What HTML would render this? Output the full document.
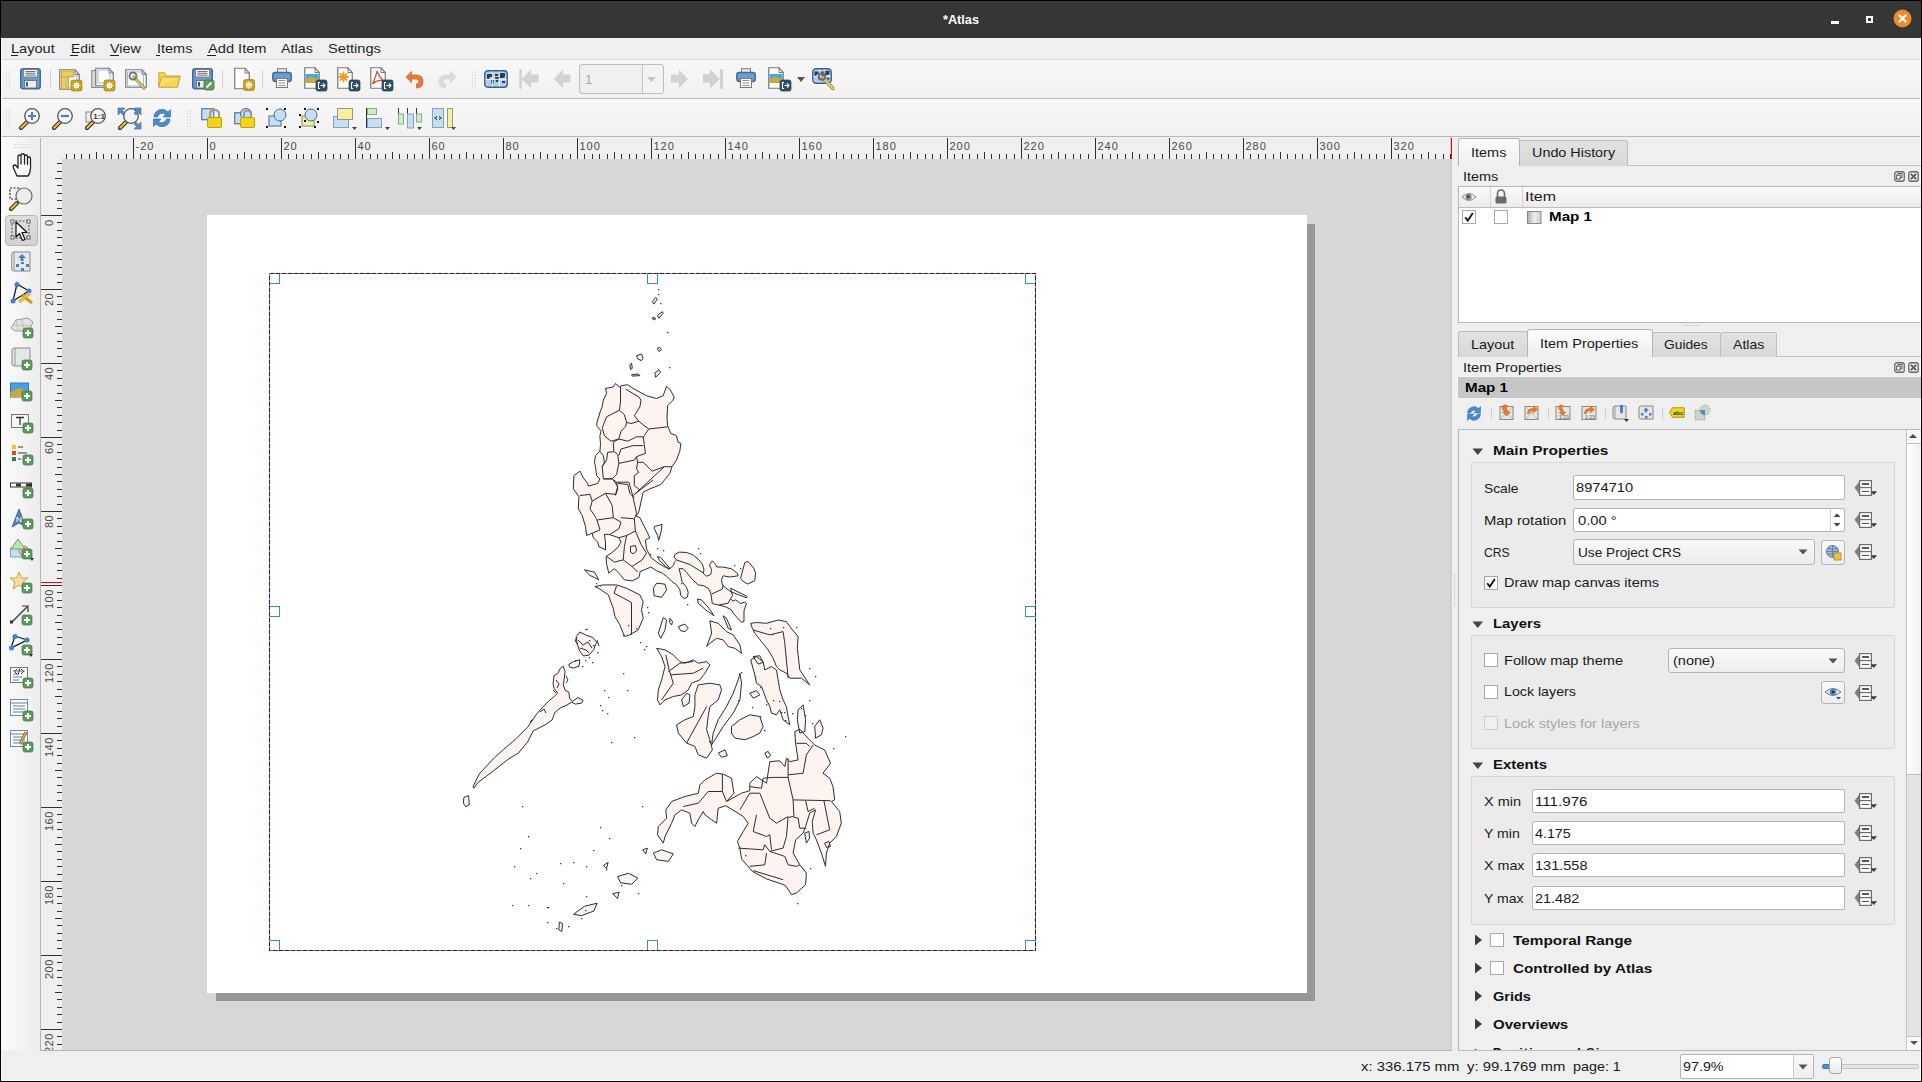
<!DOCTYPE html>
<html><head><meta charset="utf-8">
<style>
html,body{margin:0;padding:0;width:1922px;height:1082px;overflow:hidden;background:#000;position:relative;}
*{box-sizing:border-box;}
body{font-family:"Liberation Sans",sans-serif;font-size:13px;color:#1a1a1a;}
.a{position:absolute;}
.t{position:absolute;white-space:nowrap;line-height:1;}
svg{position:absolute;overflow:visible;}
</style></head><body>
<div class="a" style="left:1px;top:1px;width:1920px;height:1080px;background:#efefef;"></div>
<div class="a" style="left:1px;top:1px;width:1920px;height:37px;background:#363636;"></div>
<div class="t" style="left:943.00px;top:12.99px;font-size:13px;color:#ffffff;transform:scaleX(0.9768);transform-origin:0 0;font-weight:bold;">*Atlas</div>
<div class="a" style="left:1831px;top:21px;width:8px;height:3px;background:#fff;"></div>
<div class="a" style="left:1866px;top:16px;width:7px;height:7px;border:2px solid #fff;background:#363636;"></div>
<svg style="left:1893px;top:9px" width="19" height="19"><circle cx="9.5" cy="9.5" r="9" fill="#f0892a"/><path d="M5.8 5.8L13.2 13.2M13.2 5.8L5.8 13.2" stroke="#fff" stroke-width="2.2"/></svg>
<div class="a" style="left:1px;top:38px;width:1920px;height:21px;background:#efefef;"></div>
<div class="a" style="left:1px;top:59px;width:1920px;height:1px;background:#d8d8d8;"></div>
<div class="t" style="left:11.40px;top:41.99px;font-size:13px;color:#1e1e1e;transform:scaleX(1.1212);transform-origin:0 0;">Layout</div>
<div class="t" style="left:70.80px;top:41.99px;font-size:13px;color:#1e1e1e;transform:scaleX(1.0658);transform-origin:0 0;">Edit</div>
<div class="t" style="left:110.30px;top:41.99px;font-size:13px;color:#1e1e1e;transform:scaleX(1.1020);transform-origin:0 0;">View</div>
<div class="t" style="left:156.50px;top:41.99px;font-size:13px;color:#1e1e1e;transform:scaleX(1.1137);transform-origin:0 0;">Items</div>
<div class="t" style="left:207.50px;top:41.99px;font-size:13px;color:#1e1e1e;transform:scaleX(1.1250);transform-origin:0 0;">Add Item</div>
<div class="t" style="left:281.40px;top:41.99px;font-size:13px;color:#1e1e1e;transform:scaleX(1.0994);transform-origin:0 0;">Atlas</div>
<div class="t" style="left:328.40px;top:41.99px;font-size:13px;color:#1e1e1e;transform:scaleX(1.1257);transform-origin:0 0;">Settings</div>
<div class="a" style="left:11px;top:55px;width:7px;height:1px;background:#1e1e1e;"></div>
<div class="a" style="left:70px;top:55px;width:8px;height:1px;background:#1e1e1e;"></div>
<div class="a" style="left:110px;top:55px;width:9px;height:1px;background:#1e1e1e;"></div>
<div class="a" style="left:156px;top:55px;width:4px;height:1px;background:#1e1e1e;"></div>
<div class="a" style="left:207px;top:55px;width:9px;height:1px;background:#1e1e1e;"></div>
<div class="a" style="left:1px;top:60px;width:1920px;height:38px;background:linear-gradient(#f8f8f8,#f1f1f1);"></div>
<div class="a" style="left:1px;top:98px;width:1920px;height:1px;background:#bdbdbd;"></div>
<div class="a" style="left:1px;top:99px;width:1920px;height:37px;background:linear-gradient(#f8f8f8,#f1f1f1);"></div>
<div class="a" style="left:1px;top:136px;width:1920px;height:1px;background:#b8b8b8;"></div>
<div class="a" style="left:1px;top:137px;width:39px;height:913px;background:linear-gradient(90deg,#fbfbfb,#ececec);"></div>
<div class="a" style="left:40px;top:138px;width:1px;height:912px;background:#b5b5b5;"></div>
<div class="a" style="left:41px;top:137px;width:1410px;height:22px;background:#efefef;"></div>
<div class="a" style="left:41px;top:159px;width:21px;height:891px;background:#efefef;"></div>
<div class="a" style="left:62px;top:159px;width:1390px;height:891px;background:#d7d7d7;"></div>
<div class="a" style="left:40px;top:1050px;width:1412px;height:1px;background:#b5b5b5;"></div>
<div class="a" style="left:216px;top:224px;width:1099px;height:777px;background:#979797;"></div>
<div class="a" style="left:207px;top:215px;width:1100px;height:778px;background:#ffffff;"></div>
<div class="a" style="left:1452px;top:137px;width:469px;height:913px;background:#efefef;"></div>
<div class="a" style="left:1450px;top:137px;width:2px;height:913px;background:#cfcfcf;"></div>
<div class="a" style="left:1px;top:1051px;width:1920px;height:29px;background:#efefef;"></div>
<div class="a" style="left:1px;top:1080px;width:1920px;height:1px;background:#ffffff;"></div>
<div class="a" style="left:1px;top:38px;width:1px;height:1043px;background:#fbfbfb;"></div>
<div class="a" style="left:1920px;top:38px;width:1px;height:392px;background:#fbfbfb;"></div>
<div class="a" style="left:1920px;top:1051px;width:1px;height:30px;background:#fbfbfb;"></div>
<svg style="left:0;top:0" width="1922" height="1082"><path d="M66.5 154V159M74.5 154V159M81.5 154V159M89.5 154V159M96.5 152V159M103.5 154V159M111.5 154V159M118.5 154V159M126.5 154V159M133.5 138V159M140.5 154V159M148.5 154V159M155.5 154V159M163.5 154V159M170.5 152V159M177.5 154V159M185.5 154V159M192.5 154V159M200.5 154V159M207.5 138V159M214.5 154V159M222.5 154V159M229.5 154V159M237.5 154V159M244.5 152V159M251.5 154V159M259.5 154V159M266.5 154V159M274.5 154V159M281.5 138V159M288.5 154V159M296.5 154V159M303.5 154V159M311.5 154V159M318.5 152V159M325.5 154V159M333.5 154V159M340.5 154V159M348.5 154V159M355.5 138V159M362.5 154V159M370.5 154V159M377.5 154V159M385.5 154V159M392.5 152V159M399.5 154V159M407.5 154V159M414.5 154V159M422.5 154V159M429.5 138V159M436.5 154V159M444.5 154V159M451.5 154V159M459.5 154V159M466.5 152V159M473.5 154V159M481.5 154V159M488.5 154V159M496.5 154V159M503.5 138V159M510.5 154V159M518.5 154V159M525.5 154V159M533.5 154V159M540.5 152V159M547.5 154V159M555.5 154V159M562.5 154V159M570.5 154V159M577.5 138V159M584.5 154V159M592.5 154V159M599.5 154V159M607.5 154V159M614.5 152V159M621.5 154V159M629.5 154V159M636.5 154V159M644.5 154V159M651.5 138V159M658.5 154V159M666.5 154V159M673.5 154V159M681.5 154V159M688.5 152V159M695.5 154V159M703.5 154V159M710.5 154V159M718.5 154V159M725.5 138V159M732.5 154V159M740.5 154V159M747.5 154V159M755.5 154V159M762.5 152V159M769.5 154V159M777.5 154V159M784.5 154V159M792.5 154V159M799.5 138V159M806.5 154V159M814.5 154V159M821.5 154V159M829.5 154V159M836.5 152V159M843.5 154V159M851.5 154V159M858.5 154V159M866.5 154V159M873.5 138V159M880.5 154V159M888.5 154V159M895.5 154V159M903.5 154V159M910.5 152V159M917.5 154V159M925.5 154V159M932.5 154V159M940.5 154V159M947.5 138V159M954.5 154V159M962.5 154V159M969.5 154V159M977.5 154V159M984.5 152V159M991.5 154V159M999.5 154V159M1006.5 154V159M1014.5 154V159M1021.5 138V159M1028.5 154V159M1036.5 154V159M1043.5 154V159M1051.5 154V159M1058.5 152V159M1065.5 154V159M1073.5 154V159M1080.5 154V159M1088.5 154V159M1095.5 138V159M1102.5 154V159M1110.5 154V159M1117.5 154V159M1125.5 154V159M1132.5 152V159M1139.5 154V159M1147.5 154V159M1154.5 154V159M1162.5 154V159M1169.5 138V159M1176.5 154V159M1184.5 154V159M1191.5 154V159M1199.5 154V159M1206.5 152V159M1213.5 154V159M1221.5 154V159M1228.5 154V159M1236.5 154V159M1243.5 138V159M1250.5 154V159M1258.5 154V159M1265.5 154V159M1273.5 154V159M1280.5 152V159M1287.5 154V159M1295.5 154V159M1302.5 154V159M1310.5 154V159M1317.5 138V159M1324.5 154V159M1332.5 154V159M1339.5 154V159M1347.5 154V159M1354.5 152V159M1361.5 154V159M1369.5 154V159M1376.5 154V159M1384.5 154V159M1391.5 138V159M1398.5 154V159M1406.5 154V159M1413.5 154V159M1421.5 154V159M1428.5 152V159M1435.5 154V159M1443.5 154V159M1450.5 154V159M57 163.5H62M57 171.5H62M55 178.5H62M57 185.5H62M57 193.5H62M57 200.5H62M57 208.5H62M41 215.5H62M57 222.5H62M57 230.5H62M57 237.5H62M57 245.5H62M55 252.5H62M57 259.5H62M57 267.5H62M57 274.5H62M57 282.5H62M41 289.5H62M57 296.5H62M57 304.5H62M57 311.5H62M57 319.5H62M55 326.5H62M57 333.5H62M57 341.5H62M57 348.5H62M57 356.5H62M41 363.5H62M57 370.5H62M57 378.5H62M57 385.5H62M57 393.5H62M55 400.5H62M57 407.5H62M57 415.5H62M57 422.5H62M57 430.5H62M41 437.5H62M57 444.5H62M57 452.5H62M57 459.5H62M57 467.5H62M55 474.5H62M57 481.5H62M57 489.5H62M57 496.5H62M57 504.5H62M41 511.5H62M57 518.5H62M57 526.5H62M57 533.5H62M57 541.5H62M55 548.5H62M57 555.5H62M57 563.5H62M57 570.5H62M57 578.5H62M41 585.5H62M57 592.5H62M57 600.5H62M57 607.5H62M57 615.5H62M55 622.5H62M57 629.5H62M57 637.5H62M57 644.5H62M57 652.5H62M41 659.5H62M57 666.5H62M57 674.5H62M57 681.5H62M57 689.5H62M55 696.5H62M57 703.5H62M57 711.5H62M57 718.5H62M57 726.5H62M41 733.5H62M57 740.5H62M57 748.5H62M57 755.5H62M57 763.5H62M55 770.5H62M57 777.5H62M57 785.5H62M57 792.5H62M57 800.5H62M41 807.5H62M57 814.5H62M57 822.5H62M57 829.5H62M57 837.5H62M55 844.5H62M57 851.5H62M57 859.5H62M57 866.5H62M57 874.5H62M41 881.5H62M57 888.5H62M57 896.5H62M57 903.5H62M57 911.5H62M55 918.5H62M57 925.5H62M57 933.5H62M57 940.5H62M57 948.5H62M41 955.5H62M57 962.5H62M57 970.5H62M57 977.5H62M57 985.5H62M55 992.5H62M57 999.5H62M57 1007.5H62M57 1014.5H62M57 1022.5H62M41 1029.5H62M57 1036.5H62M57 1044.5H62" stroke="#303030" stroke-width="1" fill="none"/></svg>
<div class="t" style="left:135.50px;top:140.68px;font-size:11px;color:#4a4a4a;letter-spacing:1px;">-20</div>
<div class="t" style="left:209.50px;top:140.68px;font-size:11px;color:#4a4a4a;letter-spacing:1px;">0</div>
<div class="t" style="left:283.50px;top:140.68px;font-size:11px;color:#4a4a4a;letter-spacing:1px;">20</div>
<div class="t" style="left:357.50px;top:140.68px;font-size:11px;color:#4a4a4a;letter-spacing:1px;">40</div>
<div class="t" style="left:431.50px;top:140.68px;font-size:11px;color:#4a4a4a;letter-spacing:1px;">60</div>
<div class="t" style="left:505.50px;top:140.68px;font-size:11px;color:#4a4a4a;letter-spacing:1px;">80</div>
<div class="t" style="left:579.50px;top:140.68px;font-size:11px;color:#4a4a4a;letter-spacing:1px;">100</div>
<div class="t" style="left:653.50px;top:140.68px;font-size:11px;color:#4a4a4a;letter-spacing:1px;">120</div>
<div class="t" style="left:727.50px;top:140.68px;font-size:11px;color:#4a4a4a;letter-spacing:1px;">140</div>
<div class="t" style="left:801.50px;top:140.68px;font-size:11px;color:#4a4a4a;letter-spacing:1px;">160</div>
<div class="t" style="left:875.50px;top:140.68px;font-size:11px;color:#4a4a4a;letter-spacing:1px;">180</div>
<div class="t" style="left:949.50px;top:140.68px;font-size:11px;color:#4a4a4a;letter-spacing:1px;">200</div>
<div class="t" style="left:1023.50px;top:140.68px;font-size:11px;color:#4a4a4a;letter-spacing:1px;">220</div>
<div class="t" style="left:1097.50px;top:140.68px;font-size:11px;color:#4a4a4a;letter-spacing:1px;">240</div>
<div class="t" style="left:1171.50px;top:140.68px;font-size:11px;color:#4a4a4a;letter-spacing:1px;">260</div>
<div class="t" style="left:1245.50px;top:140.68px;font-size:11px;color:#4a4a4a;letter-spacing:1px;">280</div>
<div class="t" style="left:1319.50px;top:140.68px;font-size:11px;color:#4a4a4a;letter-spacing:1px;">300</div>
<div class="t" style="left:1393.50px;top:140.68px;font-size:11px;color:#4a4a4a;letter-spacing:1px;">320</div>
<div class="a" style="left:41px;top:159px;width:14px;height:891px;overflow:hidden"><div class="t" style="left:2.68px;top:66.60px;font-size:11px;letter-spacing:0.000px;color:#4a4a4a;transform:rotate(-90deg);transform-origin:0 0;">0</div>
<div class="t" style="left:2.68px;top:147.20px;font-size:11px;letter-spacing:0.490px;color:#4a4a4a;transform:rotate(-90deg);transform-origin:0 0;">20</div>
<div class="t" style="left:2.68px;top:221.20px;font-size:11px;letter-spacing:0.490px;color:#4a4a4a;transform:rotate(-90deg);transform-origin:0 0;">40</div>
<div class="t" style="left:2.68px;top:295.20px;font-size:11px;letter-spacing:0.490px;color:#4a4a4a;transform:rotate(-90deg);transform-origin:0 0;">60</div>
<div class="t" style="left:2.68px;top:369.20px;font-size:11px;letter-spacing:0.490px;color:#4a4a4a;transform:rotate(-90deg);transform-origin:0 0;">80</div>
<div class="t" style="left:2.68px;top:449.80px;font-size:11px;letter-spacing:0.465px;color:#4a4a4a;transform:rotate(-90deg);transform-origin:0 0;">100</div>
<div class="t" style="left:2.68px;top:523.80px;font-size:11px;letter-spacing:0.465px;color:#4a4a4a;transform:rotate(-90deg);transform-origin:0 0;">120</div>
<div class="t" style="left:2.68px;top:597.80px;font-size:11px;letter-spacing:0.465px;color:#4a4a4a;transform:rotate(-90deg);transform-origin:0 0;">140</div>
<div class="t" style="left:2.68px;top:671.80px;font-size:11px;letter-spacing:0.465px;color:#4a4a4a;transform:rotate(-90deg);transform-origin:0 0;">160</div>
<div class="t" style="left:2.68px;top:745.80px;font-size:11px;letter-spacing:0.465px;color:#4a4a4a;transform:rotate(-90deg);transform-origin:0 0;">180</div>
<div class="t" style="left:2.68px;top:819.80px;font-size:11px;letter-spacing:0.465px;color:#4a4a4a;transform:rotate(-90deg);transform-origin:0 0;">200</div>
<div class="t" style="left:2.68px;top:893.80px;font-size:11px;letter-spacing:0.465px;color:#4a4a4a;transform:rotate(-90deg);transform-origin:0 0;">220</div>
</div>
<div class="a" style="left:1451px;top:138px;width:1px;height:21px;background:#ff0000;"></div>
<div class="a" style="left:41px;top:582px;width:21px;height:1px;background:#ff0000;"></div>
<div class="a" style="left:1458px;top:165px;width:463px;height:1px;background:#c2c2c2;"></div>
<div class="a" style="left:1519px;top:140px;width:109px;height:26px;background:linear-gradient(#e2e2e2,#d8d8d8);border:1px solid #bdbdbd;border-bottom:none;border-radius:3px 3px 0 0;"></div>
<div class="a" style="left:1458px;top:138px;width:62px;height:28px;background:linear-gradient(#fbfbfb,#efefef);border:1px solid #b4b4b4;border-bottom:none;border-radius:3px 3px 0 0;"></div>
<div class="t" style="left:1470.60px;top:145.99px;font-size:13px;color:#1a1a1a;transform:scaleX(1.1137);transform-origin:0 0;">Items</div>
<div class="t" style="left:1531.80px;top:146.49px;font-size:13px;color:#1a1a1a;transform:scaleX(1.1059);transform-origin:0 0;">Undo History</div>
<div class="t" style="left:1462.50px;top:169.69px;font-size:13px;color:#1a1a1a;transform:scaleX(1.1106);transform-origin:0 0;">Items</div>
<svg style="left:1894px;top:171px" width="26" height="11"><rect x="0.75" y="0.75" width="9.5" height="9.5" rx="2" fill="none" stroke="#6a6a6a" stroke-width="1.3"/><rect x="4" y="2.5" width="4" height="4" fill="none" stroke="#6a6a6a" stroke-width="1.1"/><rect x="2.5" y="4.2" width="3.8" height="3.8" fill="#fff" stroke="#6a6a6a" stroke-width="1.1"/><rect x="14.75" y="0.75" width="9.5" height="9.5" rx="2" fill="none" stroke="#6a6a6a" stroke-width="1.3"/><path d="M16.8 2.8L22.2 8.2M22.2 2.8L16.8 8.2" stroke="#5a5a5a" stroke-width="1.8"/></svg>
<div class="a" style="left:1458px;top:186px;width:463px;height:137px;background:#fff;border:1px solid #b9b9b9;border-right:none;"></div>
<div class="a" style="left:1459px;top:187px;width:462px;height:21px;background:linear-gradient(#fafafa,#ececec);border-bottom:1px solid #bdbdbd;"></div>
<div class="a" style="left:1490px;top:187px;width:1px;height:20px;background:#d2d2d2;"></div>
<div class="a" style="left:1522px;top:187px;width:1px;height:20px;background:#d2d2d2;"></div>
<div class="t" style="left:1525.40px;top:190.49px;font-size:13px;color:#1a1a1a;transform:scaleX(1.2260);transform-origin:0 0;">Item</div>
<svg style="left:1461px;top:191px" width="16" height="12"><path d="M1 6Q8 -1 15 6Q8 13 1 6Z" fill="#eee" stroke="#8a8a8a" stroke-width="1"/><circle cx="7.5" cy="6" r="3" fill="#7a7a7a"/><circle cx="7" cy="5.5" r="1" fill="#222"/></svg>
<svg style="left:1494px;top:189px" width="14" height="16"><path d="M3.5 8V5Q3.5 1 7 1Q10.5 1 10.5 5V8" fill="none" stroke="#6b6b6b" stroke-width="1.6"/><rect x="1.5" y="7.5" width="11" height="7" rx="1.5" fill="#6b6b6b"/></svg>
<div class="a" style="left:1462px;top:210px;width:14px;height:14px;background:#fff;border:1px solid #a8a8a8;"></div>
<svg style="left:1464px;top:212px" width="10" height="10"><path d="M1.2 5.2L3.8 8.6L8.8 1" fill="none" stroke="#111" stroke-width="1.8"/></svg>
<div class="a" style="left:1494px;top:210px;width:14px;height:14px;background:#fff;border:1px solid #a8a8a8;"></div>
<svg style="left:1527px;top:210px" width="15" height="14"><rect x="0.5" y="1.5" width="13.5" height="12" fill="url(#gmap)" stroke="#888"/><defs><linearGradient id="gmap"><stop offset="0" stop-color="#aaa"/><stop offset="0.5" stop-color="#eee"/><stop offset="1" stop-color="#ccc"/></linearGradient></defs></svg>
<div class="t" style="left:1549.00px;top:210.49px;font-size:13px;color:#000;transform:scaleX(1.1667);transform-origin:0 0;font-weight:bold;">Map 1</div>
<svg style="left:1454px;top:574px" width="2" height="32"><path d="M0.5 0.5v31" stroke="#a8a8a8" stroke-dasharray="1 2"/></svg>
<svg style="left:1683px;top:325px" width="18" height="2"><path d="M0.5 0.5h1M3.5 0.5h1M6.5 0.5h1M9.5 0.5h1M12.5 0.5h1M15.5 0.5h1" stroke="#aaa"/></svg>
<div class="a" style="left:1458px;top:356px;width:463px;height:1px;background:#c2c2c2;"></div>
<div class="a" style="left:1458px;top:331px;width:70px;height:26px;background:linear-gradient(#e2e2e2,#d8d8d8);border:1px solid #bdbdbd;border-bottom:none;border-radius:3px 3px 0 0;"></div>
<div class="a" style="left:1652px;top:332px;width:69px;height:25px;background:linear-gradient(#e2e2e2,#d8d8d8);border:1px solid #bdbdbd;border-bottom:none;border-radius:3px 3px 0 0;"></div>
<div class="a" style="left:1720px;top:332px;width:57px;height:25px;background:linear-gradient(#e2e2e2,#d8d8d8);border:1px solid #bdbdbd;border-bottom:none;border-radius:3px 3px 0 0;"></div>
<div class="a" style="left:1527px;top:329px;width:126px;height:28px;background:linear-gradient(#fbfbfb,#efefef);border:1px solid #b4b4b4;border-bottom:none;border-radius:3px 3px 0 0;"></div>
<div class="t" style="left:1470.80px;top:337.69px;font-size:13px;color:#1a1a1a;transform:scaleX(1.1084);transform-origin:0 0;">Layout</div>
<div class="t" style="left:1539.70px;top:336.99px;font-size:13px;color:#1a1a1a;transform:scaleX(1.1153);transform-origin:0 0;">Item Properties</div>
<div class="t" style="left:1663.50px;top:337.59px;font-size:13px;color:#1a1a1a;transform:scaleX(1.0604);transform-origin:0 0;">Guides</div>
<div class="t" style="left:1732.70px;top:337.59px;font-size:13px;color:#1a1a1a;transform:scaleX(1.0821);transform-origin:0 0;">Atlas</div>
<div class="t" style="left:1462.50px;top:360.99px;font-size:13px;color:#1a1a1a;transform:scaleX(1.1175);transform-origin:0 0;">Item Properties</div>
<svg style="left:1894px;top:362px" width="26" height="11"><rect x="0.75" y="0.75" width="9.5" height="9.5" rx="2" fill="none" stroke="#6a6a6a" stroke-width="1.3"/><rect x="4" y="2.5" width="4" height="4" fill="none" stroke="#6a6a6a" stroke-width="1.1"/><rect x="2.5" y="4.2" width="3.8" height="3.8" fill="#fff" stroke="#6a6a6a" stroke-width="1.1"/><rect x="14.75" y="0.75" width="9.5" height="9.5" rx="2" fill="none" stroke="#6a6a6a" stroke-width="1.3"/><path d="M16.8 2.8L22.2 8.2M22.2 2.8L16.8 8.2" stroke="#5a5a5a" stroke-width="1.8"/></svg>
<div class="a" style="left:1457px;top:376px;width:464px;height:23px;background:#f5f5f5;"></div>
<div class="a" style="left:1458px;top:377px;width:463px;height:21px;background:#c6c6c6;"></div>
<div class="t" style="left:1464.60px;top:380.99px;font-size:13px;color:#000;transform:scaleX(1.1667);transform-origin:0 0;font-weight:bold;">Map 1</div>
<div class="a" style="left:1458px;top:429px;width:463px;height:622px;border:1px solid #b9b9b9;border-right:none;border-bottom:none;background:#efefef;"></div>
<div class="a" style="left:1906px;top:430px;width:15px;height:620px;background:#e4e4e4;border-left:1px solid #c4c4c4;"></div>
<div class="a" style="left:1907px;top:430px;width:14px;height:14px;background:#f8f8f8;border-bottom:1px solid #c2c2c2;"></div>
<div class="a" style="left:1907px;top:444px;width:14px;height:331px;background:linear-gradient(90deg,#fefefe,#f1f1f1);border-bottom:1px solid #bfbfbf;"></div>
<div class="a" style="left:1907px;top:1036px;width:14px;height:14px;background:#f8f8f8;border-top:1px solid #c2c2c2;"></div>
<div class="a" style="left:1458px;top:1050px;width:463px;height:1px;background:#bcbcbc;"></div>
<svg style="left:1908px;top:433px" width="12" height="8"><path d="M1 5L5 1L9 5Z" fill="#4a4a4a"/></svg>
<svg style="left:1908px;top:1039px" width="12" height="8"><path d="M2 2L6 6L10 2Z" fill="#555"/></svg>
<svg style="left:1472px;top:448px" width="12" height="8"><path d="M0.5 0.5H11L5.75 7Z" fill="#444"/></svg>
<div class="t" style="left:1492.80px;top:443.79px;font-size:13px;color:#111;transform:scaleX(1.1836);transform-origin:0 0;font-weight:bold;">Main Properties</div>
<div class="a" style="left:1471px;top:462px;width:424px;height:146px;border:1px solid #d6d6d6;background:#ebebeb;border-radius:2px;"></div>
<div class="t" style="left:1484.00px;top:482.19px;font-size:13px;color:#1a1a1a;transform:scaleX(1.0615);transform-origin:0 0;">Scale</div>
<div class="a" style="left:1573px;top:475px;width:272px;height:25px;background:#fff;border:1px solid #b4b4b4;border-radius:2px;"></div>
<div class="t" style="left:1576.00px;top:481.29px;font-size:13px;color:#1a1a1a;transform:scaleX(1.1297);transform-origin:0 0;">8974710</div>
<svg style="left:1854px;top:479px" width="24" height="18"><path d="M0.5 8.75L6 1.5V16Z" fill="#808080"/><rect x="5.6" y="1.6" width="11.8" height="7" fill="#fff" stroke="#6e6e6e" stroke-width="1.2"/><rect x="5.6" y="8.6" width="11.8" height="7.8" fill="#fff" stroke="#6e6e6e" stroke-width="1.2"/><path d="M8 5H15" stroke="#444" stroke-width="1.8"/><path d="M8 12.4H15" stroke="#444" stroke-width="1"/><path d="M16.5 12.2H23L19.75 16Z" fill="#3a3a3a"/></svg>
<div class="t" style="left:1484.00px;top:514.19px;font-size:13px;color:#1a1a1a;transform:scaleX(1.1386);transform-origin:0 0;">Map rotation</div>
<div class="a" style="left:1573px;top:508px;width:272px;height:24px;background:#fff;border:1px solid #b4b4b4;border-radius:2px;"></div>
<div class="a" style="left:1830px;top:509px;width:1px;height:22px;background:#d0d0d0;"></div>
<svg style="left:1832px;top:511px" width="10" height="18"><path d="M1.5 6L5 2.5L8.5 6Z" fill="#444"/><path d="M1.5 12L5 15.5L8.5 12Z" fill="#444"/></svg>
<div class="t" style="left:1578.20px;top:514.19px;font-size:13px;color:#1a1a1a;transform:scaleX(1.1341);transform-origin:0 0;">0.00 °</div>
<svg style="left:1854px;top:511px" width="24" height="18"><path d="M0.5 8.75L6 1.5V16Z" fill="#808080"/><rect x="5.6" y="1.6" width="11.8" height="7" fill="#fff" stroke="#6e6e6e" stroke-width="1.2"/><rect x="5.6" y="8.6" width="11.8" height="7.8" fill="#fff" stroke="#6e6e6e" stroke-width="1.2"/><path d="M8 5H15" stroke="#444" stroke-width="1.8"/><path d="M8 12.4H15" stroke="#444" stroke-width="1"/><path d="M16.5 12.2H23L19.75 16Z" fill="#3a3a3a"/></svg>
<div class="t" style="left:1484.00px;top:546.29px;font-size:13px;color:#1a1a1a;transform:scaleX(0.9369);transform-origin:0 0;">CRS</div>
<div class="a" style="left:1573px;top:539px;width:242px;height:26px;background:linear-gradient(#f9f9f9,#ededed);border:1px solid #b4b4b4;border-radius:3px;"></div>
<div class="t" style="left:1578.20px;top:546.29px;font-size:13px;color:#1a1a1a;transform:scaleX(1.0490);transform-origin:0 0;">Use Project CRS</div>
<svg style="left:1798px;top:549px" width="10" height="6"><path d="M0.5 0.5H9.5L5 5.5Z" fill="#555"/></svg>
<div class="a" style="left:1821px;top:540px;width:24px;height:25px;background:linear-gradient(#f9f9f9,#ededed);border:1px solid #b4b4b4;border-radius:3px;"></div>
<svg style="left:1825px;top:544px" width="17" height="17"><circle cx="7.5" cy="7.5" r="6" fill="#9db7d5" stroke="#5a7aa0"/><path d="M1.5 7.5H13.5M7.5 1.5V13.5M3 4.5Q7.5 6 12 4.5M3 10.5Q7.5 9 12 10.5" stroke="#5a7aa0" fill="none" stroke-width="0.8"/><rect x="9" y="9" width="7" height="7" fill="#e8c240" stroke="#a88a20" stroke-width="0.8"/></svg>
<svg style="left:1854px;top:543px" width="24" height="18"><path d="M0.5 8.75L6 1.5V16Z" fill="#808080"/><rect x="5.6" y="1.6" width="11.8" height="7" fill="#fff" stroke="#6e6e6e" stroke-width="1.2"/><rect x="5.6" y="8.6" width="11.8" height="7.8" fill="#fff" stroke="#6e6e6e" stroke-width="1.2"/><path d="M8 5H15" stroke="#444" stroke-width="1.8"/><path d="M8 12.4H15" stroke="#444" stroke-width="1"/><path d="M16.5 12.2H23L19.75 16Z" fill="#3a3a3a"/></svg>
<div class="a" style="left:1484px;top:576px;width:14px;height:14px;background:#fff;border:1px solid #a8a8a8;"></div>
<svg style="left:1486px;top:578px" width="10" height="10"><path d="M1.2 5.2L3.8 8.6L8.8 1" fill="none" stroke="#111" stroke-width="1.8"/></svg>
<div class="t" style="left:1503.80px;top:575.99px;font-size:13px;color:#1a1a1a;transform:scaleX(1.1182);transform-origin:0 0;">Draw map canvas items</div>
<svg style="left:1472px;top:621px" width="12" height="8"><path d="M0.5 0.5H11L5.75 7Z" fill="#444"/></svg>
<div class="t" style="left:1492.50px;top:616.99px;font-size:13px;color:#111;transform:scaleX(1.1449);transform-origin:0 0;font-weight:bold;">Layers</div>
<div class="a" style="left:1471px;top:635px;width:424px;height:114px;border:1px solid #d6d6d6;background:#ebebeb;border-radius:2px;"></div>
<div class="a" style="left:1484px;top:653px;width:14px;height:14px;background:#fff;border:1px solid #a8a8a8;"></div>
<div class="t" style="left:1503.80px;top:653.99px;font-size:13px;color:#1a1a1a;transform:scaleX(1.1204);transform-origin:0 0;">Follow map theme</div>
<div class="a" style="left:1668px;top:648px;width:177px;height:25px;background:linear-gradient(#f9f9f9,#ededed);border:1px solid #b4b4b4;border-radius:3px;"></div>
<div class="t" style="left:1673.00px;top:653.99px;font-size:13px;color:#1a1a1a;transform:scaleX(1.1153);transform-origin:0 0;">(none)</div>
<svg style="left:1828px;top:658px" width="10" height="6"><path d="M0.5 0.5H9.5L5 5.5Z" fill="#555"/></svg>
<svg style="left:1854px;top:652px" width="24" height="18"><path d="M0.5 8.75L6 1.5V16Z" fill="#808080"/><rect x="5.6" y="1.6" width="11.8" height="7" fill="#fff" stroke="#6e6e6e" stroke-width="1.2"/><rect x="5.6" y="8.6" width="11.8" height="7.8" fill="#fff" stroke="#6e6e6e" stroke-width="1.2"/><path d="M8 5H15" stroke="#444" stroke-width="1.8"/><path d="M8 12.4H15" stroke="#444" stroke-width="1"/><path d="M16.5 12.2H23L19.75 16Z" fill="#3a3a3a"/></svg>
<div class="a" style="left:1484px;top:685px;width:14px;height:14px;background:#fff;border:1px solid #a8a8a8;"></div>
<div class="t" style="left:1503.80px;top:685.49px;font-size:13px;color:#1a1a1a;transform:scaleX(1.0930);transform-origin:0 0;">Lock layers</div>
<div class="a" style="left:1821px;top:681px;width:24px;height:23px;background:linear-gradient(#f9f9f9,#ededed);border:1px solid #b4b4b4;border-radius:3px;"></div>
<svg style="left:1824px;top:686px" width="18" height="14"><path d="M1 6Q9 -1 17 6Q9 13 1 6Z" fill="#dfe6ee" stroke="#6c7c90" stroke-width="1"/><circle cx="9" cy="6" r="3.2" fill="#5b86b8"/><circle cx="9" cy="6" r="1.3" fill="#1b2a3c"/><path d="M12 11H17L14.5 13.5Z" fill="#444"/></svg>
<svg style="left:1854px;top:684px" width="24" height="18"><path d="M0.5 8.75L6 1.5V16Z" fill="#808080"/><rect x="5.6" y="1.6" width="11.8" height="7" fill="#fff" stroke="#6e6e6e" stroke-width="1.2"/><rect x="5.6" y="8.6" width="11.8" height="7.8" fill="#fff" stroke="#6e6e6e" stroke-width="1.2"/><path d="M8 5H15" stroke="#444" stroke-width="1.8"/><path d="M8 12.4H15" stroke="#444" stroke-width="1"/><path d="M16.5 12.2H23L19.75 16Z" fill="#3a3a3a"/></svg>
<div class="a" style="left:1484px;top:716px;width:14px;height:14px;background:#efefef;border:1px solid #cdcdcd;"></div>
<div class="t" style="left:1503.80px;top:716.89px;font-size:13px;color:#a8a8a8;transform:scaleX(1.1182);transform-origin:0 0;">Lock styles for layers</div>
<svg style="left:1472px;top:762px" width="12" height="8"><path d="M0.5 0.5H11L5.75 7Z" fill="#444"/></svg>
<div class="t" style="left:1492.80px;top:757.99px;font-size:13px;color:#111;transform:scaleX(1.1491);transform-origin:0 0;font-weight:bold;">Extents</div>
<div class="a" style="left:1471px;top:776px;width:424px;height:149px;border:1px solid #d6d6d6;background:#ebebeb;border-radius:2px;"></div>
<div class="t" style="left:1484.20px;top:795.49px;font-size:13px;color:#1a1a1a;transform:scaleX(1.1140);transform-origin:0 0;">X min</div>
<div class="a" style="left:1532px;top:789px;width:313px;height:24px;background:#fff;border:1px solid #b4b4b4;border-radius:2px;"></div>
<div class="t" style="left:1535.40px;top:794.99px;font-size:13px;color:#1a1a1a;transform:scaleX(1.1655);transform-origin:0 0;">111.976</div>
<svg style="left:1854px;top:792px" width="24" height="18"><path d="M0.5 8.75L6 1.5V16Z" fill="#808080"/><rect x="5.6" y="1.6" width="11.8" height="7" fill="#fff" stroke="#6e6e6e" stroke-width="1.2"/><rect x="5.6" y="8.6" width="11.8" height="7.8" fill="#fff" stroke="#6e6e6e" stroke-width="1.2"/><path d="M8 5H15" stroke="#444" stroke-width="1.8"/><path d="M8 12.4H15" stroke="#444" stroke-width="1"/><path d="M16.5 12.2H23L19.75 16Z" fill="#3a3a3a"/></svg>
<div class="t" style="left:1484.20px;top:827.49px;font-size:13px;color:#1a1a1a;transform:scaleX(1.0842);transform-origin:0 0;">Y min</div>
<div class="a" style="left:1532px;top:821px;width:313px;height:24px;background:#fff;border:1px solid #b4b4b4;border-radius:2px;"></div>
<div class="t" style="left:1535.40px;top:826.99px;font-size:13px;color:#1a1a1a;transform:scaleX(1.0993);transform-origin:0 0;">4.175</div>
<svg style="left:1854px;top:824px" width="24" height="18"><path d="M0.5 8.75L6 1.5V16Z" fill="#808080"/><rect x="5.6" y="1.6" width="11.8" height="7" fill="#fff" stroke="#6e6e6e" stroke-width="1.2"/><rect x="5.6" y="8.6" width="11.8" height="7.8" fill="#fff" stroke="#6e6e6e" stroke-width="1.2"/><path d="M8 5H15" stroke="#444" stroke-width="1.8"/><path d="M8 12.4H15" stroke="#444" stroke-width="1"/><path d="M16.5 12.2H23L19.75 16Z" fill="#3a3a3a"/></svg>
<div class="t" style="left:1484.20px;top:859.49px;font-size:13px;color:#1a1a1a;transform:scaleX(1.0989);transform-origin:0 0;">X max</div>
<div class="a" style="left:1532px;top:853px;width:313px;height:24px;background:#fff;border:1px solid #b4b4b4;border-radius:2px;"></div>
<div class="t" style="left:1535.40px;top:858.99px;font-size:13px;color:#1a1a1a;transform:scaleX(1.1171);transform-origin:0 0;">131.558</div>
<svg style="left:1854px;top:856px" width="24" height="18"><path d="M0.5 8.75L6 1.5V16Z" fill="#808080"/><rect x="5.6" y="1.6" width="11.8" height="7" fill="#fff" stroke="#6e6e6e" stroke-width="1.2"/><rect x="5.6" y="8.6" width="11.8" height="7.8" fill="#fff" stroke="#6e6e6e" stroke-width="1.2"/><path d="M8 5H15" stroke="#444" stroke-width="1.8"/><path d="M8 12.4H15" stroke="#444" stroke-width="1"/><path d="M16.5 12.2H23L19.75 16Z" fill="#3a3a3a"/></svg>
<div class="t" style="left:1484.20px;top:892.49px;font-size:13px;color:#1a1a1a;transform:scaleX(1.0821);transform-origin:0 0;">Y max</div>
<div class="a" style="left:1532px;top:886px;width:313px;height:24px;background:#fff;border:1px solid #b4b4b4;border-radius:2px;"></div>
<div class="t" style="left:1535.40px;top:891.99px;font-size:13px;color:#1a1a1a;transform:scaleX(1.1136);transform-origin:0 0;">21.482</div>
<svg style="left:1854px;top:889px" width="24" height="18"><path d="M0.5 8.75L6 1.5V16Z" fill="#808080"/><rect x="5.6" y="1.6" width="11.8" height="7" fill="#fff" stroke="#6e6e6e" stroke-width="1.2"/><rect x="5.6" y="8.6" width="11.8" height="7.8" fill="#fff" stroke="#6e6e6e" stroke-width="1.2"/><path d="M8 5H15" stroke="#444" stroke-width="1.8"/><path d="M8 12.4H15" stroke="#444" stroke-width="1"/><path d="M16.5 12.2H23L19.75 16Z" fill="#3a3a3a"/></svg>
<svg style="left:1474px;top:934px" width="9" height="12"><path d="M1 0.5V11.5L8 6Z" fill="#3a3a3a"/></svg>
<div class="a" style="left:1490px;top:933px;width:14px;height:14px;background:#fff;border:1px solid #a8a8a8;"></div>
<div class="t" style="left:1512.70px;top:934.39px;font-size:13px;color:#111;transform:scaleX(1.1806);transform-origin:0 0;font-weight:bold;">Temporal Range</div>
<svg style="left:1474px;top:962px" width="9" height="12"><path d="M1 0.5V11.5L8 6Z" fill="#3a3a3a"/></svg>
<div class="a" style="left:1490px;top:961px;width:14px;height:14px;background:#fff;border:1px solid #a8a8a8;"></div>
<div class="t" style="left:1512.70px;top:962.19px;font-size:13px;color:#111;transform:scaleX(1.1736);transform-origin:0 0;font-weight:bold;">Controlled by Atlas</div>
<svg style="left:1474px;top:990px" width="9" height="12"><path d="M1 0.5V11.5L8 6Z" fill="#3a3a3a"/></svg>
<div class="t" style="left:1492.80px;top:990.39px;font-size:13px;color:#111;transform:scaleX(1.1170);transform-origin:0 0;font-weight:bold;">Grids</div>
<svg style="left:1474px;top:1018px" width="9" height="12"><path d="M1 0.5V11.5L8 6Z" fill="#3a3a3a"/></svg>
<div class="t" style="left:1492.80px;top:1018.19px;font-size:13px;color:#111;transform:scaleX(1.1558);transform-origin:0 0;font-weight:bold;">Overviews</div>
<div class="a" style="left:1459px;top:1040px;width:447px;height:10px;overflow:hidden"><div class="t" style="left:33.80px;top:6.19px;font-size:13px;color:#111;font-weight:bold;letter-spacing:0.9px;">Position and Size</div><svg style="left:15px;top:8px" width="9" height="12"><path d="M1 0.5V11.5L8 6Z" fill="#3a3a3a"/></svg></div>
<div class="t" style="left:1361.20px;top:1060.19px;font-size:13px;color:#1a1a1a;transform:scaleX(1.1443);transform-origin:0 0;">x: 336.175 mm</div>
<div class="t" style="left:1467.20px;top:1060.19px;font-size:13px;color:#1a1a1a;transform:scaleX(1.1443);transform-origin:0 0;">y: 99.1769 mm</div>
<div class="t" style="left:1573.20px;top:1060.19px;font-size:13px;color:#1a1a1a;transform:scaleX(1.1025);transform-origin:0 0;">page: 1</div>
<div class="a" style="left:1680px;top:1054px;width:134px;height:25px;background:#fff;border:1px solid #b4b4b4;border-radius:2px;"></div>
<div class="a" style="left:1793px;top:1055px;width:20px;height:23px;background:linear-gradient(#f9f9f9,#ededed);border-left:1px solid #c8c8c8;"></div>
<svg style="left:1798px;top:1064px" width="10" height="6"><path d="M0.5 0.5H9.5L5 5.5Z" fill="#555"/></svg>
<div class="t" style="left:1683.10px;top:1060.19px;font-size:13px;color:#1a1a1a;transform:scaleX(1.1016);transform-origin:0 0;">97.9%</div>
<div class="a" style="left:1822px;top:1064px;width:97px;height:5px;background:#e4e4e4;border:1px solid #c2c2c2;border-radius:2px;"></div>
<div class="a" style="left:1822px;top:1064px;width:12px;height:5px;background:#4a90d9;border:1px solid #3c78b8;border-radius:2px;"></div>
<div class="a" style="left:1829px;top:1057px;width:13px;height:17px;background:linear-gradient(#fdfdfd,#e8e8e8);border:1px solid #a9a9a9;border-radius:3px;"></div>
<svg style="left:0;top:0" width="1922" height="1082"><path d="M605.5 388.5 L613.3 386.9 L615.5 383.5 L619.4 386.9 L621.0 385.8 L627.7 384.7 L633.2 388.5 L646.5 395.7 L656.5 398.5 L663.2 395.7 L666.5 386.3 L669.8 389.1 L674.2 396.9 L673.1 400.2 L667.6 405.7 L667.0 417.9 L667.6 425.7 L670.9 433.5 L676.5 435.7 L678.1 442.3 L680.9 443.4 L679.8 451.2 L676.5 460.1 L672.0 466.7 L669.8 473.4 L665.4 478.9 L660.9 484.5 L649.8 488.9 L643.2 492.2 L638.7 512.3 L636.0 516.0 L639.9 517.7 L649.9 537.7 L645.4 539.9 L646.5 548.8 L650.8 557.5 L656.6 562.0 L664.1 566.6 L669.9 568.7 L673.3 565.4 L674.5 562.0 L676.6 560.0 L674.1 557.0 L675.3 554.1 L679.1 552.1 L686.6 552.5 L693.2 555.0 L698.2 559.1 L702.4 564.1 L704.0 569.9 L703.2 573.3 L706.5 576.2 L710.7 574.5 L711.5 569.5 L709.4 564.9 L712.3 560.8 L715.3 564.1 L716.9 567.0 L722.3 567.0 L731.5 568.7 L737.7 573.7 L738.1 575.8 L729.8 577.0 L723.2 575.8 L721.5 579.9 L722.3 584.9 L728.1 589.9 L731.5 592.0 L732.7 595.3 L730.6 598.6 L732.7 601.1 L735.6 599.9 L740.6 603.6 L744.8 602.0 L746.4 603.6 L744.0 610.7 L744.0 621.5 L741.5 622.3 L736.9 617.3 L733.1 613.2 L731.5 609.9 L725.7 606.9 L719.8 605.3 L712.3 603.6 L711.5 598.2 L710.7 593.2 L708.2 588.2 L703.2 585.7 L698.2 584.9 L691.6 578.7 L686.6 572.4 L683.2 568.7 L679.1 568.7 L680.7 575.3 L682.0 581.6 L686.6 587.4 L688.2 592.4 L687.4 597.0 L684.1 598.6 L680.7 595.3 L679.9 589.9 L676.6 584.9 L671.6 581.2 L666.6 576.2 L662.5 573.3 L656.6 570.8 L650.8 567.0 L644.2 569.9 L640.0 571.6 L639.9 573.2 L638.8 577.6 L632.1 580.9 L624.4 579.8 L619.9 574.3 L614.4 568.7 L608.8 573.2 L606.6 564.3 L606.1 556.5 L611.0 553.2 L617.7 547.7 L621.0 542.1 L618.8 537.7 L608.8 534.4 L604.4 534.4 L605.5 542.1 L605.5 549.9 L598.8 546.6 L597.7 542.1 L593.3 537.7 L592.2 533.2 L586.6 535.5 L585.5 526.6 L582.2 515.5 L578.3 508.8 L578.9 496.6 L573.3 488.9 L573.9 475.6 L580.0 471.2 L583.3 477.8 L587.7 483.4 L588.3 486.1 L597.7 483.4 L599.9 478.9 L596.6 475.6 L595.5 466.7 L594.4 462.3 L595.5 455.6 L599.9 451.2 L600.5 444.5 L599.9 435.7 L601.1 431.2 L596.6 425.7 L597.2 421.3 L598.8 416.8 L599.9 412.4 L602.2 406.8 L603.3 400.2 L606.6 393.5ZM630.5 546.6 L635.4 545.4 L636.6 551.0 L633.2 553.8 L630.5 552.1ZM654.3 526.6 L662.1 524.4 L661.0 532.1 L658.7 540.5 L657.6 535.5 L654.3 528.8ZM657.5 556.6 L660.8 557.5 L669.9 568.3 L668.3 569.1 L659.1 560.0ZM740.6 578.3 L744.8 562.5 L748.1 561.6 L753.9 568.3 L755.6 573.3 L754.8 580.7 L747.3 584.1 L742.3 580.7ZM730.6 588.2 L747.3 596.5 L746.4 597.8 L731.5 592.0ZM697.4 599.0 L701.5 599.9 L709.0 608.2 L714.0 615.7 L705.7 609.9 L698.2 603.2ZM653.3 588.2 L656.6 583.2 L664.9 584.1 L666.6 589.9 L661.6 597.4 L654.1 595.7ZM584.4 569.9 L594.4 572.1 L598.8 579.8 L590.0 575.4ZM594.9 586.6 L603.3 584.9 L616.6 584.9 L626.6 588.3 L639.9 594.9 L643.2 601.6 L641.5 609.9 L643.2 618.2 L638.2 629.9 L629.9 634.8 L624.9 636.5 L623.2 633.2 L619.9 624.9 L614.9 616.5 L613.2 608.2 L608.3 594.9 L599.9 589.1ZM652.3 301.6 L655.6 297.5 L657.3 299.1 L653.9 304.1ZM657.3 315.7 L662.3 311.6 L663.1 313.3 L658.9 318.2ZM652.3 317.4 L655.6 318.2 L654.8 319.9 L652.8 319.1ZM657.3 348.2 L659.8 347.3 L661.4 349.8 L658.9 351.5ZM636.5 355.7 L641.5 354.0 L643.1 358.2 L641.5 360.6 L637.8 359.0ZM629.8 364.8 L631.5 363.1 L632.3 368.1 L630.7 369.8ZM631.5 374.8 L638.2 373.9 L639.8 375.6 L632.3 376.1ZM654.8 373.1 L658.9 369.8 L660.6 372.3 L655.6 377.3ZM473.1 786.4 L479.6 773.4 L494.4 757.7 L503.6 749.4 L516.5 738.3 L527.6 727.2 L532.8 719.8 L536.5 714.2 L542.0 707.8 L548.5 701.3 L554.9 695.7 L557.7 693.0 L554.0 688.4 L553.1 683.7 L554.0 675.4 L557.7 673.6 L560.5 668.0 L563.3 666.2 L565.1 671.7 L564.2 679.1 L563.3 684.7 L565.1 690.2 L568.8 692.1 L569.7 698.5 L572.5 701.3 L578.0 697.6 L583.1 700.4 L581.7 703.1 L575.3 704.1 L571.6 702.2 L567.0 705.0 L560.5 707.8 L554.9 712.4 L552.2 719.8 L545.0 725.0 L533.2 730.9 L527.6 742.0 L518.4 753.1 L509.1 758.6 L492.5 771.6 L485.1 777.1 L477.7 782.7 L474.0 788.2ZM463.9 797.4 L468.5 795.6 L469.4 804.8 L465.7 806.7 L463.3 803.0ZM576.2 636.6 L579.9 632.0 L585.4 634.8 L592.8 637.6 L596.5 642.2 L593.7 649.6 L589.1 655.1 L583.6 656.0 L579.9 651.4 L577.1 644.0ZM568.8 664.3 L573.4 661.6 L579.9 659.7 L579.0 666.2 L573.4 668.0 L569.7 667.1ZM617.5 876.5 L628.5 873.3 L637.9 878.0 L631.6 884.3 L620.6 882.8ZM573.5 914.2 L584.5 906.3 L597.1 903.2 L593.9 911.0 L581.4 915.7ZM559.4 922.0 L562.5 923.6 L561.9 931.4 L558.8 929.9ZM603.4 865.5 L608.1 862.3 L606.5 868.6ZM612.8 893.7 L619.1 892.2 L617.5 898.5ZM642.6 849.8 L647.4 848.2 L645.8 853.8ZM657.5 834.8 L658.3 826.5 L666.6 818.2 L665.8 809.9 L671.6 801.5 L684.9 796.5 L698.3 793.2 L699.9 784.9 L704.9 779.9 L716.6 773.2 L723.2 774.1 L731.5 778.2 L734.0 793.2 L726.5 801.5 L741.5 793.2 L749.8 790.7 L749.8 783.2 L756.5 776.6 L766.5 783.2 L769.8 761.6 L779.8 760.8 L784.8 766.6 L786.4 758.3 L789.8 761.6 L798.1 759.9 L795.6 743.3 L794.8 731.6 L799.8 729.2 L808.1 738.3 L814.7 745.0 L824.7 750.0 L830.5 763.3 L823.0 773.2 L829.7 778.2 L833.0 786.6 L834.7 799.9 L831.4 801.5 L839.7 811.5 L841.3 823.2 L836.4 836.5 L829.7 843.1 L826.4 853.1 L825.5 866.4 L821.4 853.1 L816.4 839.8 L813.1 833.1 L812.2 821.5 L815.6 809.9 L809.7 813.2 L805.6 826.5 L803.1 833.1 L795.6 839.8 L793.1 853.1 L799.8 864.8 L806.4 873.1 L805.6 884.7 L796.4 893.0 L791.4 894.7 L785.6 885.6 L781.4 883.9 L766.5 878.9 L752.3 871.4 L741.5 858.9 L739.9 848.1 L737.4 841.5 L743.2 831.5 L748.2 823.2 L743.2 816.5 L734.0 810.7 L725.7 805.7 L718.2 808.2 L716.6 823.2 L711.6 819.8 L704.9 814.8 L703.2 811.5 L698.3 819.8 L694.9 826.5 L691.6 823.2 L689.9 813.2 L681.6 809.9 L675.0 814.8 L671.6 823.2 L665.0 836.5 L663.3 843.1ZM653.3 853.1 L661.6 849.8 L673.3 853.9 L668.3 861.4 L656.7 859.8ZM824.7 843.1 L828.9 841.5 L830.5 846.5 L826.4 847.3ZM804.7 833.1 L808.9 831.5 L809.7 838.1 L806.4 843.1ZM656.6 648.3 L665.0 649.9 L673.3 654.9 L679.9 661.6 L684.9 663.2 L693.3 659.9 L698.2 663.2 L706.6 661.6 L709.9 664.9 L704.9 673.2 L699.9 679.9 L691.6 683.2 L688.3 689.9 L681.6 694.9 L673.3 696.5 L665.0 699.9 L660.0 704.8 L657.5 699.9 L658.3 689.9 L661.6 679.9 L665.0 666.6 L661.6 656.6ZM681.6 699.9 L686.6 693.2 L689.9 694.9 L689.1 703.2 L683.3 706.5ZM698.2 684.9 L709.9 683.2 L719.9 684.9 L721.5 689.9 L718.2 699.9 L709.9 706.5 L708.2 716.5 L706.6 729.8 L709.9 739.8 L712.4 749.8 L706.6 758.1 L698.2 754.8 L694.9 746.4 L686.6 743.1 L678.3 733.1 L676.6 724.8 L684.9 719.8 L693.3 716.5 L694.9 706.5 L694.9 694.9ZM739.9 673.2 L741.5 683.2 L739.9 699.9 L733.2 713.2 L723.2 726.5 L714.9 739.8 L711.6 744.8 L713.2 733.1 L718.2 719.8 L726.5 706.5 L733.2 693.2 L738.2 679.9ZM731.5 726.5 L739.9 719.8 L749.8 714.8 L759.8 716.5 L763.1 726.5 L759.8 733.1 L753.2 736.5 L744.8 739.8 L734.9 738.1 L731.5 733.1ZM718.2 753.1 L724.9 749.8 L727.4 755.6 L721.5 757.3ZM764.8 753.1 L768.1 751.4 L770.6 755.6 L767.3 758.1ZM709.9 620.8 L718.2 623.3 L726.5 631.6 L733.2 634.9 L739.9 644.9 L741.5 653.3 L734.9 648.3 L728.2 646.6 L723.2 639.9 L716.6 638.3 L709.9 643.3 L706.6 646.6 L711.6 633.3ZM723.2 615.8 L726.5 618.3 L731.5 630.0 L728.2 628.3ZM750.7 623.3 L756.5 622.5 L766.5 623.3 L778.1 620.0 L786.4 621.6 L789.8 626.6 L798.1 636.6 L797.3 648.3 L798.1 654.9 L799.8 669.9 L803.1 674.9 L809.7 684.9 L801.4 678.2 L789.8 678.2 L786.4 673.2 L779.8 669.9 L776.5 666.6 L773.1 658.2 L768.1 649.9 L761.5 641.6 L754.8 633.3 L752.3 628.3ZM750.7 659.9 L756.5 656.6 L763.1 661.6 L764.8 669.9 L771.5 666.6 L776.5 669.9 L778.1 679.9 L779.8 689.9 L783.1 699.9 L786.4 706.5 L788.1 716.5 L789.8 724.8 L783.1 719.8 L779.8 709.8 L776.5 714.8 L771.5 713.2 L769.8 706.5 L766.5 699.9 L761.5 686.5 L756.5 683.2 L754.8 674.9ZM753.2 656.6 L759.8 655.7 L763.1 662.4 L758.2 664.1ZM798.1 709.8 L803.1 704.8 L805.6 719.8 L804.8 731.5 L799.8 733.1 L797.3 719.8ZM814.7 726.5 L819.7 719.8 L823.1 728.1 L821.4 734.8 L815.6 738.1ZM663.3 617.5 L666.6 620.0 L665.0 630.0 L660.8 638.3 L658.3 633.3ZM678.3 626.6 L684.9 624.1 L688.3 628.3 L684.9 631.6 L680.8 630.8ZM670.0 618.3 L672.5 621.6 L671.6 625.0 L669.6 622.5ZM749.8 693.2 L756.5 690.7 L759.8 694.9 L753.2 698.2Z" fill="#fdf3ef" stroke="#2e2e2e" stroke-width="1" stroke-linejoin="round"/><path d="M620.5 386.9 L620.5 402.4 L619.4 410.2 L606.6 416.8 L602.2 427.9 L604.4 435.7 L611.0 441.2 L618.8 439.0 L627.7 441.2 L636.5 436.8 L643.2 436.8M619.4 410.2 L624.3 414.6 L626.6 422.4 L631.0 423.5 L638.8 421.3 L648.7 429.0M625.5 389.1 L638.8 396.9 L641.0 400.2 L639.9 406.8 L634.3 415.7 L638.8 421.3M648.7 429.0 L667.6 426.8M626.6 422.4 L625.5 426.8 L621.0 431.2 L618.8 439.0M648.7 429.0 L644.3 435.7 L643.2 436.8 L644.3 444.5 L645.4 453.4 L636.5 456.7 L634.3 460.1 L618.8 463.4M618.8 439.0 L613.3 442.3 L613.8 451.2 L617.7 454.5 L618.8 463.4 L616.6 474.5 L612.1 478.9 L603.3 478.9M613.8 451.7 L607.7 452.3 L606.6 460.1 L602.2 466.7 L603.3 478.4M621.0 449.0 L633.2 445.6 L643.2 445.6M618.8 455.6 L621.0 449.0M636.5 456.7 L637.6 462.3 L643.2 462.3 L652.1 471.2 L664.3 466.7 L672.0 466.7M637.6 462.3 L636.5 468.9 L638.8 472.3 L634.3 475.6 L634.3 485.6 L639.9 490.0M664.3 466.7 L633.2 495.6M599.9 451.2 L603.3 455.6 L604.4 462.3 L602.2 466.7M603.3 478.9 L612.1 478.9 L616.6 482.2 L617.7 488.9 L615.5 495.6M617.7 483.4 L627.7 484.5 L629.9 493.3 L634.3 497.8M580.0 495.5 L590.0 494.4 L592.2 501.1 L590.0 508.8 L596.6 518.8 L600.0 529.9 L592.2 533.2M592.2 501.1 L605.5 493.3 L615.5 494.4 L617.7 486.7 L613.3 480.0M605.5 493.3 L612.2 505.5 L613.3 517.7 L597.7 519.9M613.3 517.7 L621.0 522.2 L618.8 528.8 L609.9 534.4M621.0 517.7 L634.3 518.8 L636.6 513.3 L632.1 493.3 L628.8 482.2 L616.6 482.2M634.3 518.8 L635.4 531.0 L626.6 535.5 L618.8 537.7M626.6 535.5 L624.4 546.6 L623.2 559.9 L614.4 562.1 L606.6 556.5M635.4 531.0 L641.0 544.3 L646.5 553.2 L642.1 559.9 L632.1 566.5 L637.7 572.1M623.2 559.9 L632.1 566.5M634.3 494.4 L653.2 480.0M676.6 560.0 L689.9 564.5 L703.2 572.8M711.5 594.1 L722.3 589.1 L723.2 584.9M719.0 604.9 L728.1 603.2 L730.6 598.6M616.6 585.8 L614.1 593.2 L631.5 602.4 L631.5 634.8M578.0 640.0 L583.0 645.0 L588.0 642.0 L592.0 648.0M580.0 648.0 L586.0 650.0 L589.0 653.0M577.0 637.0 L575.0 641.0 L578.0 644.0M556.0 680.0 L559.0 684.0 L557.0 688.0M553.0 690.0 L556.0 693.0M566.0 676.0 L568.0 680.0 L566.0 683.0M540.0 712.0 L544.0 709.0 L546.0 713.0M530.0 722.0 L533.0 719.0M597.0 640.0 L599.0 646.0M585.0 630.0 L588.0 629.0M722.4 774.1 L722.4 791.5 L726.5 801.5M683.3 806.5 L698.3 803.2 L708.2 791.5 L722.4 791.5M749.8 786.6 L761.5 788.2 L763.1 778.2 L773.1 777.4 L788.1 777.4 L788.1 758.3M788.1 774.9 L803.1 773.2 L806.4 754.9 L813.1 745.0M788.1 777.4 L793.1 799.9 L830.5 800.7M793.1 799.9 L793.9 816.5 L788.1 817.3 L786.4 836.5 L783.1 848.1 L769.8 851.4M739.9 809.9 L749.8 793.2 L759.8 793.2 L769.8 818.2 L776.5 823.2 L788.1 816.5M756.5 814.8 L753.2 831.5 L766.5 836.5 L769.8 834.8 L771.5 849.8M738.2 848.1 L763.1 849.8 L764.8 844.8 L769.8 851.4 L784.8 856.4M749.8 866.4 L764.8 864.8 L766.5 853.1M753.2 870.6 L783.1 879.7M805.6 800.7 L808.1 811.5 L814.7 808.2M823.9 800.7 L829.7 829.8 L816.4 834.8M793.9 817.3 L798.1 818.2 L799.8 828.2 L806.4 828.2M796.4 743.3 L806.4 743.3 L809.7 746.6M784.8 856.4 L788.1 864.8 L796.4 866.4 L799.8 864.8M668.3 671.6 L679.9 663.2 L693.3 661.6M670.0 674.9 L693.3 673.2 L703.2 668.2M665.8 654.9 L669.1 669.9 L673.3 683.2 L661.6 699.9M706.6 706.5 L686.6 743.1M753.2 630.0 L769.8 634.9 L783.1 631.6 L784.8 643.3 L786.4 659.9 L788.1 678.2" fill="none" stroke="#2e2e2e" stroke-width="1" stroke-linejoin="round"/><path d="M658 289h1.3v1.3h-1.3ZM658 294h1.3v1.3h-1.3ZM660 303h1.3v1.3h-1.3ZM667 332h1.3v1.3h-1.3ZM669 367h1.3v1.3h-1.3ZM681 583h1.3v1.3h-1.3ZM687 604h1.3v1.3h-1.3ZM628 625h1.3v1.3h-1.3ZM636 628h1.3v1.3h-1.3ZM623 673h1.3v1.3h-1.3ZM627 690h1.3v1.3h-1.3ZM522 806h1.3v1.3h-1.3ZM528 836h1.3v1.3h-1.3ZM520 848h1.3v1.3h-1.3ZM514 866h1.3v1.3h-1.3ZM530 878h1.3v1.3h-1.3ZM634 737h1.3v1.3h-1.3ZM611 742h1.3v1.3h-1.3ZM709 741h1.3v1.3h-1.3ZM760 716h1.3v1.3h-1.3ZM792 713h1.3v1.3h-1.3ZM764 730h1.3v1.3h-1.3ZM845 736h1.3v1.3h-1.3ZM833 748h1.3v1.3h-1.3ZM589 640h1.3v1.3h-1.3ZM593 645h1.3v1.3h-1.3ZM597 652h1.3v1.3h-1.3ZM585 660h1.3v1.3h-1.3ZM582 666h1.3v1.3h-1.3ZM600 705h1.3v1.3h-1.3ZM602 710h1.3v1.3h-1.3ZM607 713h1.3v1.3h-1.3ZM536 873h1.3v1.3h-1.3ZM560 863h1.3v1.3h-1.3ZM573 862h1.3v1.3h-1.3ZM606 869h1.3v1.3h-1.3ZM621 885h1.3v1.3h-1.3ZM638 893h1.3v1.3h-1.3ZM586 896h1.3v1.3h-1.3ZM585 910h1.3v1.3h-1.3ZM548 907h1.3v1.3h-1.3ZM547 922h1.3v1.3h-1.3ZM797 903h1.3v1.3h-1.3ZM810 868h1.3v1.3h-1.3ZM745 855h1.3v1.3h-1.3ZM738 700h1.3v1.3h-1.3ZM752 707h1.3v1.3h-1.3ZM766 704h1.3v1.3h-1.3ZM773 700h1.3v1.3h-1.3ZM781 712h1.3v1.3h-1.3ZM785 720h1.3v1.3h-1.3ZM650 554h1.3v1.3h-1.3ZM657 548h1.3v1.3h-1.3ZM663 550h1.3v1.3h-1.3ZM698 548h1.3v1.3h-1.3ZM700 553h1.3v1.3h-1.3ZM734 565h1.3v1.3h-1.3ZM740 568h1.3v1.3h-1.3ZM596 583h1.3v1.3h-1.3ZM600 585h1.3v1.3h-1.3ZM647 607h1.3v1.3h-1.3ZM648 612h1.3v1.3h-1.3ZM623 635h1.3v1.3h-1.3ZM640 642h1.3v1.3h-1.3ZM644 649h1.3v1.3h-1.3ZM646 646h1.3v1.3h-1.3ZM770 628h1.3v1.3h-1.3ZM772 634h1.3v1.3h-1.3ZM783 627h1.3v1.3h-1.3ZM796 627h1.3v1.3h-1.3ZM809 668h1.3v1.3h-1.3ZM815 676h1.3v1.3h-1.3ZM741 672h1.3v1.3h-1.3ZM755 677h1.3v1.3h-1.3ZM760 687h1.3v1.3h-1.3ZM779 701h1.3v1.3h-1.3ZM784 712h1.3v1.3h-1.3ZM801 708h1.3v1.3h-1.3ZM805 715h1.3v1.3h-1.3ZM809 700h1.3v1.3h-1.3ZM812 723h1.3v1.3h-1.3ZM589 657h1.3v1.3h-1.3ZM592 662h1.3v1.3h-1.3ZM575 660h1.3v1.3h-1.3ZM604 690h1.3v1.3h-1.3ZM608 697h1.3v1.3h-1.3ZM642 806h1.3v1.3h-1.3ZM600 827h1.3v1.3h-1.3ZM609 838h1.3v1.3h-1.3ZM593 850h1.3v1.3h-1.3ZM586 866h1.3v1.3h-1.3ZM563 883h1.3v1.3h-1.3ZM547 907h1.3v1.3h-1.3ZM528 905h1.3v1.3h-1.3ZM512 905h1.3v1.3h-1.3ZM556 928h1.3v1.3h-1.3ZM581 918h1.3v1.3h-1.3ZM568 926h1.3v1.3h-1.3Z" fill="#333"/></svg>
<svg style="left:0;top:0" width="1922" height="1082"><rect x="269.5" y="273.5" width="10" height="10" fill="none" stroke="#2e8ccf" stroke-width="1"/><rect x="647.5" y="273.5" width="10" height="10" fill="none" stroke="#2e8ccf" stroke-width="1"/><rect x="1025.5" y="273.5" width="10" height="10" fill="none" stroke="#2e8ccf" stroke-width="1"/><rect x="269.5" y="606.5" width="10" height="10" fill="none" stroke="#2e8ccf" stroke-width="1"/><rect x="1025.5" y="606.5" width="10" height="10" fill="none" stroke="#2e8ccf" stroke-width="1"/><rect x="269.5" y="940.5" width="10" height="10" fill="none" stroke="#2e8ccf" stroke-width="1"/><rect x="647.5" y="940.5" width="10" height="10" fill="none" stroke="#2e8ccf" stroke-width="1"/><rect x="1025.5" y="940.5" width="10" height="10" fill="none" stroke="#2e8ccf" stroke-width="1"/><rect x="269.5" y="273.5" width="766" height="677" fill="none" stroke="#3aa0da" stroke-width="1" shape-rendering="crispEdges"/><rect x="269.5" y="273.5" width="766" height="677" fill="none" stroke="#660030" stroke-width="1" stroke-dasharray="4 2" shape-rendering="crispEdges"/></svg>
<svg style="left:6px;top:71px" width="5" height="17" viewBox="0 0 5 17"><path d="M0.5 0.5v16M3.5 0.5v16" stroke="#c4c4c4" stroke-dasharray="1 2" stroke-width="1"/></svg>
<svg style="left:20px;top:68px" width="23" height="23" viewBox="0 0 23 23"><rect x="0.75" y="0.75" width="19.5" height="20" rx="2.5" fill="#6c9ccf" stroke="#3d6aa0" stroke-width="1.5"/><rect x="3.5" y="1.5" width="14" height="7.5" fill="#f2f2f2" stroke="#777" stroke-width="0.8"/><path d="M5.5 3.5h10M5.5 5.3h10M5.5 7.1h10" stroke="#555" stroke-width="0.8"/><rect x="4.5" y="12.5" width="12" height="7.5" fill="#ececec" stroke="#666" stroke-width="0.8"/><rect x="6" y="14" width="2" height="4.5" fill="#3d5f85"/></svg>
<svg style="left:50px;top:70px" width="1" height="18" viewBox="0 0 1 18"><rect width="1" height="18" fill="#d2d2d2"/></svg>
<svg style="left:59px;top:69px" width="24" height="23" viewBox="0 0 24 23"><g transform="translate(0,0)"><path d="M0.75 0.75H16L20.25 5.5V20.25H0.75Z" fill="#fff" stroke="#777" stroke-width="1.2"/><path d="M16 0.75V5.5H20.25" fill="none" stroke="#777" stroke-width="1"/></g><rect x="2.5" y="4" width="7" height="16" fill="#f5cf4a" stroke="#c59c1a" stroke-width="0.8"/><rect x="2.5" y="2" width="12" height="6" fill="#f5cf4a" stroke="#c59c1a" stroke-width="0.8"/><rect x="7" y="7" width="11" height="11" fill="none" stroke="#9fb8e0" stroke-width="1"/><rect x="12" y="11" width="11" height="11" rx="2" fill="#c9a017" stroke="#a88410" stroke-width="0.7"/><circle cx="17.5" cy="16.5" r="2.2" fill="none" stroke="#fff" stroke-width="1.1"/><path d="M17.5 12.5V20.5M13.5 16.5H21.5M14.7 13.7L20.3 19.3M20.3 13.7L14.7 19.3" stroke="#fff" stroke-width="0.8"/></svg>
<svg style="left:91px;top:67px" width="25" height="25" viewBox="0 0 25 25"><rect x="0.75" y="3.5" width="17" height="17" fill="#d8d8d8" stroke="#888" stroke-width="1"/><g transform="translate(4,0.5)"><path d="M0.75 0.75H14L18.25 5.5V18.25H0.75Z" fill="#fff" stroke="#777" stroke-width="1.2"/><path d="M14 0.75V5.5H18.25" fill="none" stroke="#777" stroke-width="1"/></g><rect x="7" y="3" width="12" height="13" fill="none" stroke="#9fb8e0" stroke-width="1"/><rect x="13" y="13" width="11" height="11" rx="2" fill="#c9a017" stroke="#a88410" stroke-width="0.7"/><circle cx="18.5" cy="18.5" r="2.2" fill="none" stroke="#fff" stroke-width="1.1"/><path d="M18.5 14.5V22.5M14.5 18.5H22.5M15.7 15.7L21.3 21.3M21.3 15.7L15.7 21.3" stroke="#fff" stroke-width="0.8"/></svg>
<svg style="left:125px;top:69px" width="24" height="23" viewBox="0 0 24 23"><path d="M0.75 0.75H17L21.25 5.5V18.25H0.75Z" fill="#fff" stroke="#777" stroke-width="1.2"/><path d="M17 0.75V5.5H21.25" fill="none" stroke="#777" stroke-width="1"/><rect x="2.5" y="3" width="16" height="14" fill="none" stroke="#9fb8e0" stroke-width="1"/><path d="M9 8L19 19" stroke="#8a7a40" stroke-width="3.2" stroke-linecap="round"/><path d="M9 8L19 19" stroke="#e8d070" stroke-width="1.8" stroke-linecap="round"/><circle cx="8" cy="7" r="3.5" fill="none" stroke="#777" stroke-width="2"/></svg>
<svg style="left:158px;top:70px" width="23" height="19" viewBox="0 0 23 19"><path d="M0.75 2.75V17.25H19.5L22.25 6H8L6.5 2.75Z" fill="#f6d55a" stroke="#c9a52d" stroke-width="1"/><path d="M0.75 17.25L3.5 7H22.25" fill="#f8dc6e" stroke="#c9a52d" stroke-width="1"/></svg>
<svg style="left:192px;top:68px" width="23" height="23" viewBox="0 0 23 23"><rect x="0.75" y="0.75" width="19.5" height="20" rx="2.5" fill="#6c9ccf" stroke="#3d6aa0" stroke-width="1.5"/><rect x="3.5" y="1.5" width="14" height="7.5" fill="#f2f2f2" stroke="#777" stroke-width="0.8"/><path d="M5.5 3.5h10M5.5 5.3h10M5.5 7.1h10" stroke="#555" stroke-width="0.8"/><rect x="4.5" y="12.5" width="12" height="7.5" fill="#ececec" stroke="#666" stroke-width="0.8"/><rect x="6" y="14" width="2" height="4.5" fill="#3d5f85"/><rect x="12" y="12" width="10" height="10" rx="2" fill="#5e9d5e" stroke="#3f7a3f" stroke-width="0.8"/><path d="M14.5 19.5L19.5 14.5" stroke="#fff" stroke-width="2"/></svg>
<svg style="left:222px;top:70px" width="1" height="18" viewBox="0 0 1 18"><rect width="1" height="18" fill="#d2d2d2"/></svg>
<svg style="left:234px;top:67px" width="21" height="24" viewBox="0 0 21 24"><g transform="translate(0,0.5)"><path d="M0.75 0.75H11L15.25 5.5V21.25H0.75Z" fill="#fff" stroke="#777" stroke-width="1.2"/><path d="M11 0.75V5.5H15.25" fill="none" stroke="#777" stroke-width="1"/></g><rect x="9.5" y="12.5" width="11" height="11" rx="2" fill="#c9a017" stroke="#a88410" stroke-width="0.7"/><circle cx="15.0" cy="18.0" r="2.2" fill="none" stroke="#fff" stroke-width="1.1"/><path d="M15.0 14.0V22.0M11.0 18.0H19.0M12.2 15.2L17.8 20.8M17.8 15.2L12.2 20.8" stroke="#fff" stroke-width="0.8"/></svg>
<svg style="left:262px;top:70px" width="1" height="18" viewBox="0 0 1 18"><rect width="1" height="18" fill="#d2d2d2"/></svg>
<svg style="left:272px;top:68px" width="20" height="21" viewBox="0 0 20 21"><rect x="5.5" y="0.75" width="9" height="5" fill="#eee" stroke="#777" stroke-width="1"/><rect x="0.75" y="4.5" width="18.5" height="9" rx="2.5" fill="#6c9ccf" stroke="#3d6aa0" stroke-width="1.4"/><rect x="4.5" y="10.5" width="11" height="9" fill="#fff" stroke="#777" stroke-width="1"/><path d="M6.5 12.5h7M6.5 15h7M6.5 17.5h7" stroke="#7a7a7a" stroke-width="0.8"/></svg>
<svg style="left:304px;top:67px" width="24" height="25" viewBox="0 0 24 25"><path d="M0.75 0.75H11L15.25 5.5V21.25H0.75Z" fill="#fff" stroke="#777" stroke-width="1.2"/><path d="M11 0.75V5.5H15.25" fill="none" stroke="#777" stroke-width="1"/><rect x="1.5" y="7" width="13" height="9" fill="#4aa8e0"/><path d="M1.5 12L7 9.5L14.5 12.5V16H1.5Z" fill="#c9a93e"/><rect x="12" y="13" width="11" height="11" rx="2" fill="#2f5068" stroke="#22394b" stroke-width="0.7"/><path d="M16 15.5H14.5V21.5H16M16.5 18.5H21M19 16.5L21 18.5L19 20.5" fill="none" stroke="#fff" stroke-width="1.1"/></svg>
<svg style="left:337px;top:67px" width="24" height="25" viewBox="0 0 24 25"><path d="M0.75 0.75H11L15.25 5.5V21.25H0.75Z" fill="#fff" stroke="#777" stroke-width="1.2"/><path d="M11 0.75V5.5H15.25" fill="none" stroke="#777" stroke-width="1"/><path d="M6.5 5.5V14.5M2 10H11M3.3 6.8L9.7 13.2M9.7 6.8L3.3 13.2" stroke="#f39a1e" stroke-width="1.8" stroke-linecap="round"/><rect x="12" y="13" width="11" height="11" rx="2" fill="#2f5068" stroke="#22394b" stroke-width="0.7"/><path d="M16 15.5H14.5V21.5H16M16.5 18.5H21M19 16.5L21 18.5L19 20.5" fill="none" stroke="#fff" stroke-width="1.1"/></svg>
<svg style="left:370px;top:67px" width="24" height="25" viewBox="0 0 24 25"><path d="M0.75 0.75H11L15.25 5.5V21.25H0.75Z" fill="#fff" stroke="#777" stroke-width="1.2"/><path d="M11 0.75V5.5H15.25" fill="none" stroke="#777" stroke-width="1"/><path d="M7 4Q6 10 2.5 17Q8 12 14 14Q9 10 7 4Z" fill="none" stroke="#e0443a" stroke-width="1.3"/><rect x="12" y="13" width="11" height="11" rx="2" fill="#2f5068" stroke="#22394b" stroke-width="0.7"/><path d="M16 15.5H14.5V21.5H16M16.5 18.5H21M19 16.5L21 18.5L19 20.5" fill="none" stroke="#fff" stroke-width="1.1"/></svg>
<svg style="left:405px;top:70px" width="19" height="19" viewBox="0 0 19 19"><path d="M0.5 7L7 0.5V4.5H11Q18.5 4.5 18.5 11.5Q18.5 18.5 11 18.5V13.5Q13.5 13.5 13.5 11.5Q13.5 9.5 11 9.5H7V13.5Z" fill="#e2793a"/></svg>
<svg style="left:438px;top:70px" width="19" height="19" viewBox="0 0 19 19"><path d="M18.5 7L12 0.5V4.5H8Q0.5 4.5 0.5 11.5Q0.5 18.5 8 18.5V13.5Q5.5 13.5 5.5 11.5Q5.5 9.5 8 9.5H12V13.5Z" fill="#d8dcdc"/></svg>
<svg style="left:472px;top:71px" width="5" height="17" viewBox="0 0 5 17"><path d="M0.5 0.5v16M3.5 0.5v16" stroke="#c4c4c4" stroke-dasharray="1 2" stroke-width="1"/></svg>
<svg style="left:484px;top:70px" width="24" height="18" viewBox="0 0 24 18"><rect x="0.75" y="0.75" width="22.5" height="16.5" rx="3" fill="#b6cfe8" stroke="#3b5f8a" stroke-width="1.4"/><g transform="scale(1.000,1.000)"><path d="M3 4h6l-1 3h-2l-1 2h-2ZM7 10h3l-1 5h-1ZM11 4h3v2h-3ZM11 7h4l-1 5h-2ZM15 3h6v4l-2 1h-4ZM18 11h3v2h-3Z" fill="#233f5e"/></g><path d="M8.6 1.5V16.5M15.4 1.5V16.5M1.5 9.4H22.5" stroke="#eef4fa" stroke-width="0.9"/></svg>
<svg style="left:519px;top:69px" width="20" height="20" viewBox="0 0 20 20"><rect x="0.3" y="0" width="2.5" height="20" rx="1" fill="#cfd3d5"/><path d="M2.8 10L12.2 0.5V5.5H19.7V13.6H12.2V19.2Z" fill="#cfd3d5"/></svg>
<svg style="left:554px;top:69px" width="20" height="20" viewBox="0 0 20 20"><path d="M0 10L9.1 0.5V5.5H16.6V13.6H9.1V19.2Z" fill="#cfd3d5"/></svg>
<div class="a" style="left:579px;top:64px;width:85px;height:30px;background:#efefef;border:1px solid #bdbdbd;border-radius:3px;"></div>
<div class="a" style="left:642px;top:65px;width:21px;height:28px;background:#f3f3f3;border-left:1px solid #c8c8c8;border-radius:0 3px 3px 0;"></div>
<svg style="left:647px;top:77px" width="9" height="5" viewBox="0 0 9 5"><path d="M0 0H9L4.5 5Z" fill="#c4c4c4"/></svg>
<div class="t" style="left:585.00px;top:72.99px;font-size:13px;color:#a8a8a8;">1</div>
<svg style="left:671px;top:69px" width="20" height="20" viewBox="0 0 20 20"><path d="M17 10L7.9 0.5V5.5H0V13.6H7.9V19.2Z" fill="#cfd3d5"/></svg>
<svg style="left:703px;top:69px" width="20" height="20" viewBox="0 0 20 20"><rect x="17" y="0" width="3" height="20" rx="1" fill="#cfd3d5"/><path d="M17 10L7 0.3V5H0V13.8H7V19.5Z" fill="#cfd3d5"/></svg>
<svg style="left:736px;top:68px" width="20" height="21" viewBox="0 0 20 21"><rect x="5.5" y="0.75" width="9" height="5" fill="#eee" stroke="#777" stroke-width="1"/><rect x="0.75" y="4.5" width="18.5" height="9" rx="2.5" fill="#6c9ccf" stroke="#3d6aa0" stroke-width="1.4"/><rect x="4.5" y="10.5" width="11" height="9" fill="#fff" stroke="#777" stroke-width="1"/><path d="M6.5 12.5h7M6.5 15h7M6.5 17.5h7" stroke="#7a7a7a" stroke-width="0.8"/></svg>
<svg style="left:768px;top:67px" width="24" height="25" viewBox="0 0 24 25"><path d="M0.75 0.75H11L15.25 5.5V21.25H0.75Z" fill="#fff" stroke="#777" stroke-width="1.2"/><path d="M11 0.75V5.5H15.25" fill="none" stroke="#777" stroke-width="1"/><rect x="1.5" y="7" width="13" height="9" fill="#4aa8e0"/><path d="M1.5 12L7 9.5L14.5 12.5V16H1.5Z" fill="#c9a93e"/><rect x="12" y="13" width="11" height="11" rx="2" fill="#2f5068" stroke="#22394b" stroke-width="0.7"/><path d="M16 15.5H14.5V21.5H16M16.5 18.5H21M19 16.5L21 18.5L19 20.5" fill="none" stroke="#fff" stroke-width="1.1"/></svg>
<svg style="left:797px;top:77px" width="8" height="5" viewBox="0 0 8 5"><path d="M0 0H8L4 5Z" fill="#555"/></svg>
<svg style="left:812px;top:68px" width="25" height="24" viewBox="0 0 25 24"><rect x="0.75" y="0.75" width="18.5" height="14.5" rx="3.5" fill="#b6cfe8" stroke="#3b5f8a" stroke-width="1.4"/><g transform="scale(0.833,0.889)"><path d="M3 4h6l-1 3h-2l-1 2h-2ZM7 10h3l-1 5h-1ZM11 4h3v2h-3ZM11 7h4l-1 5h-2ZM15 3h6v4l-2 1h-4ZM18 11h3v2h-3Z" fill="#233f5e"/></g><path d="M7.2 1.5V14.5M12.8 1.5V14.5M1.5 8.3H18.5" stroke="#eef4fa" stroke-width="0.9"/><path d="M11 10L21 20.5" stroke="#8a7a40" stroke-width="3.4" stroke-linecap="round"/><path d="M11 10L21 20.5" stroke="#e8d070" stroke-width="2" stroke-linecap="round"/><circle cx="10" cy="8.5" r="3.3" fill="none" stroke="#6a6a6a" stroke-width="2"/></svg>
<svg style="left:6px;top:110px" width="5" height="17" viewBox="0 0 5 17"><path d="M0.5 0.5v16M3.5 0.5v16" stroke="#c4c4c4" stroke-dasharray="1 2" stroke-width="1"/></svg>
<svg style="left:18px;top:107px" width="24" height="24" viewBox="0 0 24 24"><path d="M3 21L9 15" stroke="#222" stroke-width="4" stroke-linecap="round"/><path d="M3.2 20.8L8.5 15.5" stroke="#f2c230" stroke-width="2.2" stroke-linecap="round"/><circle cx="14" cy="9" r="7.3" fill="#f4f4f4" stroke="#555" stroke-width="1.3"/><path d="M14 5V13M10 9H18" stroke="#4a80c0" stroke-width="2.2"/></svg>
<svg style="left:51px;top:107px" width="24" height="24" viewBox="0 0 24 24"><path d="M3 21L9 15" stroke="#222" stroke-width="4" stroke-linecap="round"/><path d="M3.2 20.8L8.5 15.5" stroke="#f2c230" stroke-width="2.2" stroke-linecap="round"/><circle cx="14" cy="9" r="7.3" fill="#f4f4f4" stroke="#555" stroke-width="1.3"/><path d="M10 9H18" stroke="#4a80c0" stroke-width="2.2"/></svg>
<svg style="left:84px;top:107px" width="24" height="24" viewBox="0 0 24 24"><rect x="2" y="5" width="8" height="10" fill="#eee" stroke="#888"/><path d="M3 21L9 15" stroke="#222" stroke-width="4" stroke-linecap="round"/><path d="M3.2 20.8L8.5 15.5" stroke="#f2c230" stroke-width="2.2" stroke-linecap="round"/><circle cx="14" cy="9" r="7.3" fill="#f4f4f4" stroke="#555" stroke-width="1.3"/><text x="9.3" y="12.2" font-family="Liberation Sans" font-weight="bold" font-size="8" fill="#333">1:1</text></svg>
<svg style="left:117px;top:107px" width="25" height="24" viewBox="0 0 25 24"><path d="M3 21L9 15" stroke="#222" stroke-width="4" stroke-linecap="round"/><path d="M3.2 20.8L8.5 15.5" stroke="#f2c230" stroke-width="2.2" stroke-linecap="round"/><circle cx="14" cy="9" r="7.3" fill="#f4f4f4" stroke="#555" stroke-width="1.3"/><path d="M1 1H8L5.5 3.5L8 6L6 8L3.5 5.5L1 8Z M24 1H17L19.5 3.5L17 6L19 8L21.5 5.5L24 8Z M24 22H17L19.5 19.5L17 17L19 15L21.5 17.5L24 15Z" fill="#5a8cc8" stroke="#3a6aa0" stroke-width="0.6"/></svg>
<svg style="left:151px;top:107px" width="22" height="22" viewBox="0 0 22 22"><path d="M3 10A8 8 0 0 1 17 5L19.5 2.5V10H12L14.5 7.5A5 5 0 0 0 6.5 10Z" fill="#4a8ad0" stroke="#2e6aaa" stroke-width="0.6"/><path d="M19 12A8 8 0 0 1 5 17L2.5 19.5V12H10L7.5 14.5A5 5 0 0 0 15.5 12Z" fill="#4a8ad0" stroke="#2e6aaa" stroke-width="0.6"/></svg>
<svg style="left:187px;top:110px" width="5" height="17" viewBox="0 0 5 17"><path d="M0.5 0.5v16M3.5 0.5v16" stroke="#c4c4c4" stroke-dasharray="1 2" stroke-width="1"/></svg>
<svg style="left:201px;top:108px" width="22" height="21" viewBox="0 0 22 21"><rect x="0.75" y="0.75" width="12" height="11" fill="#c4def3" stroke="#4d6b8a" stroke-width="1.1"/><path d="M9 9V6Q9 2 13.5 2Q18 2 18 6V9" fill="none" stroke="#999" stroke-width="2"/><rect x="6.5" y="9.5" width="14" height="10" rx="1.5" fill="#f2d21a" stroke="#c0a000" stroke-width="1"/></svg>
<svg style="left:234px;top:108px" width="22" height="21" viewBox="0 0 22 21"><rect x="0.75" y="4.75" width="8" height="11" fill="#c4def3" stroke="#4d6b8a" stroke-width="1.1"/><circle cx="12" cy="6" r="5.5" fill="#c4def3" stroke="#4d6b8a" stroke-width="1.1"/><path d="M10 9V6Q10 2.5 13.5 2.5Q17 2.5 17 6" fill="none" stroke="#999" stroke-width="2"/><rect x="6.5" y="9.5" width="14" height="10" rx="1.5" fill="#f2d21a" stroke="#c0a000" stroke-width="1"/></svg>
<svg style="left:266px;top:108px" width="22" height="21" viewBox="0 0 22 21"><rect x="3" y="8" width="12" height="10" fill="#c4def3" stroke="#4d6b8a" stroke-width="1"/><circle cx="14" cy="7" r="6" fill="#c4def3" stroke="#4d6b8a" stroke-width="1"/><path d="M0 0h2v2h-2ZM18 0h2v2h-2ZM0 18h2v2h-2ZM18 18h2v2h-2Z" fill="#111"/></svg>
<svg style="left:299px;top:108px" width="22" height="21" viewBox="0 0 22 21"><rect x="3" y="8" width="12" height="10" fill="#f5f0a0" stroke="#8a8a6a" stroke-width="1"/><circle cx="12" cy="7" r="6" fill="#c4def3" stroke="#4d6b8a" stroke-width="1"/><path d="M0 6h2v2h-2ZM5 12h2v2h-2ZM18 0h2v2h-2ZM18 13h2v2h-2ZM0 18h2v2h-2ZM15 18h2v2h-2ZM5 0h2v2h-2Z" fill="#111"/></svg>
<svg style="left:333px;top:108px" width="25" height="23" viewBox="0 0 25 23"><rect x="0.5" y="8.5" width="15" height="11" fill="#c4def3" stroke="#8aa0b4" stroke-width="1"/><rect x="4.5" y="0.5" width="15" height="11" fill="#f5f0a0" stroke="#9a9a7a" stroke-width="1"/><path d="M19 19H24L21.5 22Z" fill="#444"/></svg>
<svg style="left:366px;top:108px" width="25" height="23" viewBox="0 0 25 23"><path d="M0.5 0V20" stroke="#333" stroke-width="1"/><rect x="1.5" y="0.5" width="9" height="6" fill="#c8f0c0" stroke="#8aaa8a" stroke-width="1"/><rect x="1.5" y="10.5" width="14" height="9" fill="#c4def3" stroke="#8aa0b4" stroke-width="1"/><path d="M19 19H24L21.5 22Z" fill="#444"/></svg>
<svg style="left:398px;top:108px" width="25" height="23" viewBox="0 0 25 23"><path d="M0.5 0V7M9.5 0V7M18.5 0V7" stroke="#333" stroke-width="1"/><rect x="0.5" y="6" width="5" height="10" fill="#c8f0c0" stroke="#8aaa8a" stroke-width="1"/><rect x="9.5" y="6" width="6" height="14" fill="#c4def3" stroke="#8aa0b4" stroke-width="1"/><rect x="18.5" y="6" width="5" height="8" fill="#c8f0c0" stroke="#8aaa8a" stroke-width="1"/><path d="M19 19H24L21.5 22Z" fill="#444"/></svg>
<svg style="left:432px;top:108px" width="25" height="23" viewBox="0 0 25 23"><rect x="0.5" y="0.5" width="11" height="19" fill="#c4def3" stroke="#8aa0b4" stroke-width="1"/><rect x="15.5" y="0.5" width="5" height="19" fill="#f5f0a0" stroke="#9a9a7a" stroke-width="1"/><path d="M2 10H5M5 8L3 10L5 12M10 10H7M7 8L9 10L7 12" stroke="#445" stroke-width="0.9" fill="none"/><path d="M19 19H24L21.5 22Z" fill="#444"/></svg>
<svg style="left:14px;top:144px" width="17" height="4" viewBox="0 0 17 4"><path d="M0.5 0.5h16M0.5 3.5h16" stroke="#c4c4c4" stroke-dasharray="1 2" stroke-width="1"/></svg>
<svg style="left:12px;top:153px" width="20" height="25" viewBox="0 0 20 25"><path d="M5 23L1.5 15Q0.5 12.5 2.5 12Q4 12 5 14L6 15V4Q6 2 7.5 2Q9 2 9 4V11V2.5Q9 0.75 10.75 0.75Q12.5 0.75 12.5 2.5V11V3.5Q12.5 2 14 2Q15.5 2 15.5 3.5V11.5V5.5Q15.5 4 17 4Q18.5 4 18.5 5.5V15Q18.5 20 16 23Z" fill="#fff" stroke="#222" stroke-width="1.3" stroke-linejoin="round"/></svg>
<svg style="left:9px;top:186px" width="25" height="25" viewBox="0 0 25 25"><rect x="1" y="2" width="10" height="11" fill="none" stroke="#222" stroke-width="1.2" stroke-dasharray="2 1.5"/><path d="M2 23L8 17" stroke="#222" stroke-width="4" stroke-linecap="round"/><path d="M2.2 22.8L7.5 17.5" stroke="#f2c230" stroke-width="2.2" stroke-linecap="round"/><circle cx="15" cy="10" r="8" fill="#eee" stroke="#666" stroke-width="1.2"/></svg>
<div class="a" style="left:5px;top:215px;width:33px;height:31px;background:linear-gradient(#dedede,#d2d2d2);border:1px solid #b6b6b6;border-radius:4px;"></div>
<svg style="left:11px;top:220px" width="21" height="22" viewBox="0 0 21 22"><rect x="1" y="1" width="17" height="17" fill="none" stroke="#555" stroke-width="1" stroke-dasharray="2 1.5"/><rect x="0" y="0" width="3" height="3" fill="#fff" stroke="#444" stroke-width="0.8"/><rect x="16" y="0" width="3" height="3" fill="#fff" stroke="#444" stroke-width="0.8"/><rect x="0" y="16" width="3" height="3" fill="#fff" stroke="#444" stroke-width="0.8"/><rect x="16" y="16" width="3" height="3" fill="#fff" stroke="#444" stroke-width="0.8"/><path d="M5 2V17L8.5 13.5L11.5 20.5L14 19.5L11 12.5H16Z" fill="#fff" stroke="#111" stroke-width="1.2" stroke-linejoin="round"/></svg>
<svg style="left:11px;top:251px" width="21" height="22" viewBox="0 0 21 22"><path d="M3 1H19V20H3Q0.75 20 0.75 18V3Q0.75 1 3 1Z" fill="#e8e8e8" stroke="#888" stroke-width="1"/><path d="M3 1V20" stroke="#999"/><path d="M11 3L15 7H12.5V10H9.5V7H7Z" fill="#4a80c0"/><path d="M5 13h3v3h-3ZM15 13h3v3h-3ZM10 17h3v3h-3ZM10 11h3v2h-3Z" fill="#4a80c0"/></svg>
<svg style="left:10px;top:282px" width="23" height="23" viewBox="0 0 23 23"><path d="M7 2L19 9L3 19Z" fill="none" stroke="#111" stroke-width="1.2"/><circle cx="7" cy="2.5" r="2.5" fill="#3a80e0"/><circle cx="19" cy="9" r="2.5" fill="#3a80e0"/><circle cx="3" cy="19" r="2.5" fill="#3a80e0"/><path d="M9 20L20 11M12 13L22 21" stroke="#d09a20" stroke-width="3"/><path d="M9 20L20 11" stroke="#f5cf4a" stroke-width="1.6"/></svg>
<svg style="left:10px;top:317px" width="24" height="22" viewBox="0 0 24 22"><path d="M1 11L6 3L18 1L23 5L19 14L5 14Z" fill="#e2e2e2" stroke="#999" stroke-width="1"/><path d="M6 3L8 14M12 2L14 14M3 8L21 9" stroke="#bbb" stroke-width="0.8"/><rect x="13" y="11" width="10" height="10" rx="2" fill="#5a9a5a" stroke="#3c7a3c" stroke-width="0.7"/><path d="M18 13V19M15 16H21" stroke="#fff" stroke-width="2"/></svg>
<svg style="left:11px;top:347px" width="22" height="24" viewBox="0 0 22 24"><path d="M4 1H19V19H4Q1 19 1 17V3Q1 1 4 1Z" fill="#e6e6e6" stroke="#888" stroke-width="1"/><path d="M4 1V19" stroke="#999"/><rect x="11" y="13" width="10" height="10" rx="2" fill="#5a9a5a" stroke="#3c7a3c" stroke-width="0.7"/><path d="M16 15V21M13 18H19" stroke="#fff" stroke-width="2"/></svg>
<svg style="left:10px;top:382px" width="24" height="20" viewBox="0 0 24 20"><rect x="0.5" y="1" width="18" height="14" fill="#4aa0e0" stroke="#3a78a8" stroke-width="1"/><path d="M0.5 10L9 6L18.5 10V15H0.5Z" fill="#c9a93e"/><rect x="12" y="9" width="10" height="10" rx="2" fill="#5a9a5a" stroke="#3c7a3c" stroke-width="0.7"/><path d="M17 11V17M14 14H20" stroke="#fff" stroke-width="2"/></svg>
<svg style="left:11px;top:414px" width="23" height="20" viewBox="0 0 23 20"><rect x="0.5" y="0.5" width="17" height="13" fill="#f6f6f6" stroke="#777" stroke-width="1"/><path d="M5 3.5H13M9 3.5V11" stroke="#333" stroke-width="1.3"/><rect x="12" y="9" width="10" height="10" rx="2" fill="#5a9a5a" stroke="#3c7a3c" stroke-width="0.7"/><path d="M17 11V17M14 14H20" stroke="#fff" stroke-width="2"/></svg>
<svg style="left:11px;top:444px" width="23" height="22" viewBox="0 0 23 22"><rect x="1" y="1" width="4" height="4" fill="#f6c31c"/><rect x="1" y="7" width="4" height="4" fill="#e04a1a"/><rect x="1" y="13" width="4" height="4" fill="#1a8a4a"/><path d="M7 3H12M7 9H16M7 15H10" stroke="#777" stroke-width="1.3"/><rect x="12" y="11" width="10" height="10" rx="2" fill="#5a9a5a" stroke="#3c7a3c" stroke-width="0.7"/><path d="M17 13V19M14 16H20" stroke="#fff" stroke-width="2"/></svg>
<svg style="left:10px;top:482px" width="24" height="17" viewBox="0 0 24 17"><rect x="0.5" y="1" width="21" height="4" fill="#fff" stroke="#333" stroke-width="1"/><rect x="6" y="1.5" width="5" height="3" fill="#333"/><rect x="16" y="1.5" width="5" height="3" fill="#333"/><rect x="13" y="6" width="10" height="10" rx="2" fill="#5a9a5a" stroke="#3c7a3c" stroke-width="0.7"/><path d="M18 8V14M15 11H21" stroke="#fff" stroke-width="2"/></svg>
<svg style="left:11px;top:508px" width="23" height="22" viewBox="0 0 23 22"><path d="M8 1L1 19L8 15L15 19Z" fill="#5a80b0" stroke="#3a5a88" stroke-width="0.8"/><path d="M6 9V14M6 9L10 14V9" stroke="#fff" stroke-width="0.9" fill="none"/><rect x="12" y="11" width="10" height="10" rx="2" fill="#5a9a5a" stroke="#3c7a3c" stroke-width="0.7"/><path d="M17 13V19M14 16H20" stroke="#fff" stroke-width="2"/></svg>
<svg style="left:10px;top:538px" width="24" height="24" viewBox="0 0 24 24"><rect x="0.5" y="10" width="12" height="9" fill="#c4def3" stroke="#8aa0b4"/><circle cx="14" cy="13" r="5" fill="#f5b5b5" stroke="#c08080"/><path d="M8 1L15 11H1Z" fill="#b8e8b0" stroke="#70a070"/><rect x="12" y="11" width="10" height="10" rx="2" fill="#5a9a5a" stroke="#3c7a3c" stroke-width="0.7"/><path d="M17 13V19M14 16H20" stroke="#fff" stroke-width="2"/><path d="M20 20H24L22 23Z" fill="#333"/></svg>
<svg style="left:10px;top:571px" width="24" height="23" viewBox="0 0 24 23"><path d="M9 1L11.5 7H18L13 11L15 18L9 14L3 18L5 11L0 7H6.5Z" fill="#f9e0a0" stroke="#d0a040" stroke-width="1"/><rect x="12" y="12" width="10" height="10" rx="2" fill="#5a9a5a" stroke="#3c7a3c" stroke-width="0.7"/><path d="M17 14V20M14 17H20" stroke="#fff" stroke-width="2"/></svg>
<svg style="left:10px;top:603px" width="24" height="24" viewBox="0 0 24 24"><path d="M2 19L17 4" stroke="#333" stroke-width="1.2"/><path d="M12 3H18V9" fill="none" stroke="#333" stroke-width="1.2"/><rect x="0" y="17.5" width="3" height="3" fill="#333"/><rect x="12" y="12" width="10" height="10" rx="2" fill="#5a9a5a" stroke="#3c7a3c" stroke-width="0.7"/><path d="M17 14V20M14 17H20" stroke="#fff" stroke-width="2"/></svg>
<svg style="left:9px;top:634px" width="25" height="23" viewBox="0 0 25 23"><path d="M6 2L18 6L2 14Z" fill="none" stroke="#111" stroke-width="1.2"/><circle cx="6" cy="2.5" r="2.5" fill="#3a80e0"/><circle cx="18" cy="6" r="2.5" fill="#3a80e0"/><circle cx="2.5" cy="14" r="2.5" fill="#3a80e0"/><rect x="13" y="11" width="10" height="10" rx="2" fill="#5a9a5a" stroke="#3c7a3c" stroke-width="0.7"/><path d="M18 13V19M15 16H21" stroke="#fff" stroke-width="2"/><path d="M20 20H24L22 23Z" fill="#333"/></svg>
<svg style="left:10px;top:667px" width="24" height="22" viewBox="0 0 24 22"><rect x="0.5" y="0.5" width="17" height="15" fill="#fff" stroke="#777"/><path d="M3 4H15M3 7H9M3 10H12M3 13H9" stroke="#5a80b8" stroke-width="1.2"/><path d="M7 2L4.5 4.5L7 7M11 2L13.5 4.5L11 7M9.8 1.5L8.2 7.5" stroke="#222" stroke-width="0.9" fill="none"/><rect x="13" y="11" width="10" height="10" rx="2" fill="#5a9a5a" stroke="#3c7a3c" stroke-width="0.7"/><path d="M18 13V19M15 16H21" stroke="#fff" stroke-width="2"/></svg>
<svg style="left:10px;top:699px" width="24" height="23" viewBox="0 0 24 23"><rect x="0.5" y="0.5" width="17" height="16" fill="#fff" stroke="#6a8ab8"/><path d="M0.5 4H17.5M3 7H15M3 10H15M3 13H15" stroke="#5a80b8" stroke-width="1.1"/><rect x="13" y="12" width="10" height="10" rx="2" fill="#5a9a5a" stroke="#3c7a3c" stroke-width="0.7"/><path d="M18 14V20M15 17H21" stroke="#fff" stroke-width="2"/></svg>
<svg style="left:10px;top:730px" width="24" height="23" viewBox="0 0 24 23"><rect x="0.5" y="0.5" width="17" height="16" fill="#fff" stroke="#6a8ab8"/><path d="M0.5 4H17.5M3 7H15M3 10H15M3 13H15" stroke="#5a80b8" stroke-width="1.1"/><path d="M10 14L16 2" stroke="#8a6a20" stroke-width="3"/><path d="M10 14L16 2" stroke="#e8b040" stroke-width="1.6"/><rect x="13" y="12" width="10" height="10" rx="2" fill="#5a9a5a" stroke="#3c7a3c" stroke-width="0.7"/><path d="M18 14V20M15 17H21" stroke="#fff" stroke-width="2"/></svg>
<svg style="left:1466px;top:405px" width="16" height="17" viewBox="0 0 16 17"><path d="M1.5 8A6.5 6.5 0 0 1 12.5 3.5L14.5 1.5V8H8L10.2 5.8A3.8 3.8 0 0 0 4.5 8Z" fill="#4a8ad0" stroke="#2e6aaa" stroke-width="0.5"/><path d="M14.5 9A6.5 6.5 0 0 1 3.5 13.5L1.5 15.5V9H8L5.8 11.2A3.8 3.8 0 0 0 11.5 9Z" fill="#4a8ad0" stroke="#2e6aaa" stroke-width="0.5"/></svg>
<div class="a" style="left:1491px;top:408px;width:1px;height:12px;background:#d0d0d0;"></div>
<div class="a" style="left:1548px;top:408px;width:1px;height:12px;background:#d0d0d0;"></div>
<div class="a" style="left:1605px;top:408px;width:1px;height:12px;background:#d0d0d0;"></div>
<div class="a" style="left:1662px;top:408px;width:1px;height:12px;background:#d0d0d0;"></div>
<svg style="left:1499px;top:404px" width="16" height="17" viewBox="0 0 16 17"><rect x="1" y="2.5" width="13" height="13" fill="#e6e6e6" stroke="#888" stroke-width="1"/><path d="M1 15.5L14 2.5M14 15.5L1 2.5" stroke="#999" stroke-width="0.6"/><path d="M6 0.5Q3 1 3.5 4.5L5.5 8H3.5L7.5 12L11.5 8H9.5L7.5 4.5Q7 2 9 1.5" fill="#e8782a" stroke="#d0661e" stroke-width="0.6"/></svg>
<svg style="left:1524px;top:404px" width="16" height="17" viewBox="0 0 16 17"><rect x="1" y="2.5" width="13" height="13" fill="#e6e6e6" stroke="#888" stroke-width="1"/><path d="M1 15.5L14 2.5M14 15.5L1 2.5" stroke="#999" stroke-width="0.6"/><path d="M3 10Q3 4 9 4V1.5L14 5.5L9 9.5V7Q6 7 5.5 10Z" fill="#e8782a"/></svg>
<svg style="left:1555px;top:404px" width="17" height="17" viewBox="0 0 17 17"><rect x="1" y="2.5" width="14" height="13" fill="#e6e6e6" stroke="#888" stroke-width="1"/><text x="4" y="14.5" font-size="5" font-family="Liberation Sans" fill="#555">1:23</text><path d="M6 0.5Q3 1 3.5 4.5L5.5 8H3.5L7.5 12L11.5 8H9.5L7.5 4.5Q7 2 9 1.5" fill="#e8782a"/></svg>
<svg style="left:1581px;top:404px" width="17" height="17" viewBox="0 0 17 17"><rect x="1" y="2.5" width="14" height="13" fill="#e6e6e6" stroke="#888" stroke-width="1"/><text x="4" y="14.5" font-size="5" font-family="Liberation Sans" fill="#555">1:23</text><path d="M3 10Q3 4 9 4V1.5L14 5.5L9 9.5V7Q6 7 5.5 10Z" fill="#e8782a"/></svg>
<svg style="left:1612px;top:404px" width="19" height="19" viewBox="0 0 19 19"><path d="M3 2H14V15H3Q1 15 1 13V4Q1 2 3 2Z" fill="#e6e6e6" stroke="#888" stroke-width="1"/><path d="M3 2V15" stroke="#999"/><path d="M8 1H11V8L9.5 10L8 8Z" fill="#4a80c0"/><path d="M12 15H17L14.5 18Z" fill="#333"/></svg>
<svg style="left:1638px;top:404px" width="16" height="17" viewBox="0 0 16 17"><path d="M3 2H15V15H3Q1 15 1 13V4Q1 2 3 2Z" fill="#e6e6e6" stroke="#888" stroke-width="1"/><path d="M8 3.5L11 6.5H9V8.5H7V6.5H5Z" fill="#4a80c0"/><path d="M3 9h2.5v2.5h-2.5ZM11 9h2.5v2.5h-2.5ZM7 12h2.5v2.5h-2.5Z" fill="#4a80c0"/></svg>
<svg style="left:1669px;top:407px" width="16" height="11" viewBox="0 0 16 11"><path d="M0.5 5.5L3.5 0.75H15.25V10.25H3.5Z" fill="#f5d81a" stroke="#a08a10" stroke-width="0.9"/><text x="4" y="8" font-size="6" font-family="Liberation Sans" font-weight="bold" fill="#333">abc</text></svg>
<svg style="left:1694px;top:404px" width="17" height="17" viewBox="0 0 17 17"><rect x="1" y="6" width="10" height="10" fill="#c8d8c8" stroke="#8a9a8a" stroke-width="0.8" stroke-dasharray="1.2 1"/><circle cx="11" cy="6" r="5" fill="#c8d8c8" stroke="#8a9a8a" stroke-width="0.8" stroke-dasharray="1.2 1"/><path d="M6 6H11V11A5 5 0 0 1 6 6Z" fill="#5a88b0"/></svg>
</body></html>
